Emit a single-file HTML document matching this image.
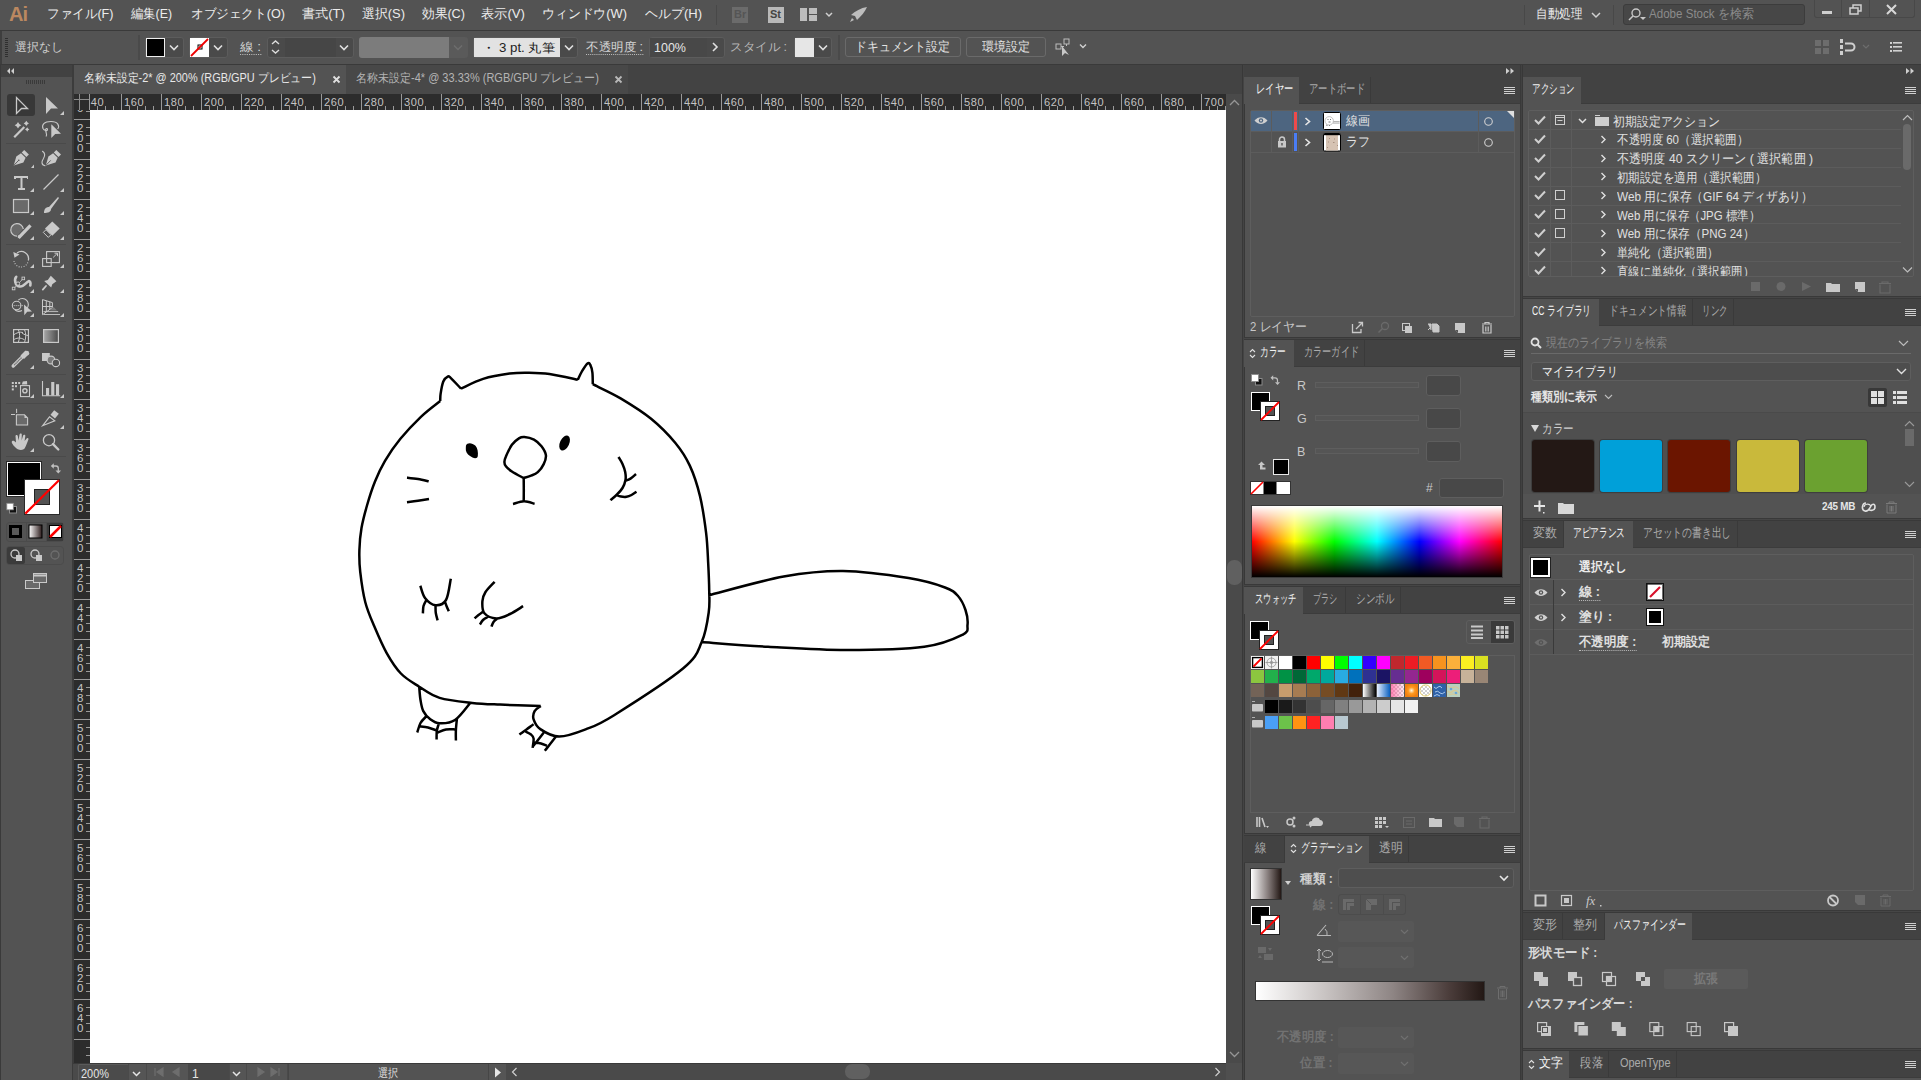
<!DOCTYPE html>
<html><head><meta charset="utf-8">
<style>
*{margin:0;padding:0;box-sizing:border-box}
html,body{width:1921px;height:1080px;overflow:hidden;background:#535353;font-family:"Liberation Sans",sans-serif;color:#d8d8d8;font-size:12px}
.a{position:absolute}
.t{position:absolute;white-space:nowrap;line-height:1}
.rn{top:97px;font-size:11px;color:#c4c4c4;letter-spacing:0.6px}
.rnv{left:77px;font-size:11.5px;color:#c4c4c4;line-height:9px}
.mn{top:7px;font-size:13px;color:#ececec}
#menubar{left:0;top:0;width:1921px;height:30px;background:#535353}
#menuline{left:0;top:30px;width:1921px;height:1px;background:#3a3a3a}
#ctrl{left:0;top:31px;width:1921px;height:33px;background:#535353}
#ctrlline{left:0;top:64px;width:1921px;height:1px;background:#3a3a3a}
#hdrrow{left:0;top:65px;width:1921px;height:12px;background:#424242}
#tools{left:1px;top:77px;width:70px;height:1003px;background:#535353}
#canvasbg{left:72px;top:65px;width:1170px;height:1015px;background:#3c3c3c}
#tabbar{left:74px;top:65px;width:1168px;height:29px;background:#434343}
#tab1{left:74px;top:65px;width:272px;height:29px;background:#535353}
#tab2{left:346px;top:65px;width:282px;height:29px;background:#484848}
#rulerT{left:74px;top:94px;width:1152px;height:16px;background:#2c2c2c}
#rulerL{left:74px;top:94px;width:16px;height:969px;background:#2c2c2c}
#artboard{left:90px;top:110px;width:1136px;height:953px;background:#fff}
#vscroll{left:1226px;top:94px;width:16px;height:986px;background:#4a4a4a}
#status{left:74px;top:1063px;width:1152px;height:17px;background:#4a4a4a}
#col1{left:1244px;top:77px;width:277px;height:1003px;background:#535353}
#col2{left:1523px;top:77px;width:398px;height:1003px;background:#535353}
</style></head><body>
<div class="a" id="menubar"></div>
<div class="a" id="menuline"></div>
<!-- MENU BAR -->
<div class="t" style="left:9px;top:4px;font-size:20px;font-weight:bold;color:#bb8860;letter-spacing:-1px">Ai</div>
<div class="t mn" style="left:47px;transform:scaleX(0.969);transform-origin:0 0">ファイル(F)</div>
<div class="t mn" style="left:131px;transform:scaleX(0.946);transform-origin:0 0">編集(E)</div>
<div class="t mn" style="left:191px;transform:scaleX(0.971);transform-origin:0 0">オブジェクト(O)</div>
<div class="t mn" style="left:302px;transform:scaleX(1.009);transform-origin:0 0">書式(T)</div>
<div class="t mn" style="left:362px;transform:scaleX(0.992);transform-origin:0 0">選択(S)</div>
<div class="t mn" style="left:422px;transform:scaleX(0.976);transform-origin:0 0">効果(C)</div>
<div class="t mn" style="left:481px;transform:scaleX(1.015);transform-origin:0 0">表示(V)</div>
<div class="t mn" style="left:542px;transform:scaleX(0.989);transform-origin:0 0">ウィンドウ(W)</div>
<div class="t mn" style="left:645px;transform:scaleX(0.999);transform-origin:0 0">ヘルプ(H)</div>
<div class="a" style="left:716px;top:5px;width:1px;height:20px;background:#484848"></div>
<div class="a" style="left:732px;top:7px;width:16px;height:16px;background:#6b6b6b"></div>
<div class="t" style="left:734px;top:9px;font-size:11px;font-weight:bold;color:#555">Br</div>
<div class="a" style="left:768px;top:7px;width:16px;height:16px;background:#b9b9b9"></div>
<div class="t" style="left:770px;top:9px;font-size:11px;font-weight:bold;color:#444">St</div>
<svg class="a" style="left:800px;top:8px" width="40" height="14"><rect x="0" y="0" width="7" height="13" fill="#bdbdbd"/><rect x="9" y="0" width="8" height="6" fill="#bdbdbd"/><rect x="9" y="7" width="8" height="6" fill="#bdbdbd"/><path d="M26 5 L29 8 L32 5" stroke="#d0d0d0" stroke-width="1.5" fill="none"/></svg>
<svg class="a" style="left:849px;top:6px" width="20" height="18"><path d="M18 1 C12 2 6 5 2 9 L6 10 L8 14 C12 10 16 6 18 1Z M3 12 L1 16 L5 14Z" fill="#bdbdbd"/></svg>
<div class="a" style="left:1524px;top:5px;width:1px;height:20px;background:#484848"></div>
<div class="t mn" style="left:1536px;transform:scaleX(0.885);transform-origin:0 0">自動処理</div>
<svg class="a" style="left:1591px;top:12px" width="12" height="8"><path d="M1 1 L5 5 L9 1" stroke="#d0d0d0" stroke-width="1.5" fill="none"/></svg>
<div class="a" style="left:1613px;top:5px;width:1px;height:20px;background:#484848"></div>
<div class="a" style="left:1623px;top:4px;width:182px;height:21px;background:#474747;border:1px solid #3c3c3c;border-radius:3px"></div>
<svg class="a" style="left:1627px;top:7px" width="22" height="16"><circle cx="9" cy="6" r="4" stroke="#c8c8c8" stroke-width="1.4" fill="none"/><path d="M6 9 L2 13" stroke="#c8c8c8" stroke-width="1.6"/><path d="M13 10 L19 10 L16 13Z" fill="#c8c8c8"/></svg>
<div class="t" style="left:1649px;top:8px;font-size:12.5px;color:#8c8c8c;transform:scaleX(0.926);transform-origin:0 0">Adobe Stock を検索</div>
<div class="a" style="left:1814px;top:-1px;width:101px;height:19px;border:1px solid #484848;border-top:none;border-radius:0 0 3px 3px"></div>
<div class="a" style="left:1841px;top:0px;width:1px;height:18px;background:#484848"></div>
<div class="a" style="left:1869px;top:0px;width:1px;height:18px;background:#484848"></div>
<div class="a" style="left:1822px;top:11px;width:10px;height:3px;background:#cfcfcf"></div>
<svg class="a" style="left:1849px;top:4px" width="14" height="12"><rect x="4" y="1" width="8" height="6" stroke="#cfcfcf" stroke-width="1.5" fill="none"/><rect x="1" y="4" width="8" height="6" stroke="#cfcfcf" stroke-width="1.5" fill="#535353"/></svg>
<svg class="a" style="left:1886px;top:4px" width="12" height="11"><path d="M1 1 L10 10 M10 1 L1 10" stroke="#d8d8d8" stroke-width="2"/></svg>

<div class="a" id="ctrl"></div>
<div class="a" id="ctrlline"></div>
<!-- CONTROL BAR -->
<div class="a" style="left:0;top:31px;width:2px;height:33px;background:#3e3e3e"></div>
<div class="a" style="left:5px;top:38px;width:3px;height:19px;background:repeating-linear-gradient(#2f2f2f 0 1px,transparent 1px 2px)"></div>
<div class="t" style="left:15px;top:41px;font-size:12px;color:#cfcfcf;transform:scaleX(0.990);transform-origin:0 0">選択なし</div>
<div class="a" style="left:138px;top:35px;width:2px;height:25px;background:#4a4a4a"></div>
<div class="a" style="left:145px;top:37px;width:39px;height:21px;border:1px solid #5c5c5c;border-radius:3px;background:#4a4a4a"></div>
<div class="a" style="left:146px;top:38px;width:19px;height:19px;background:#000;border:1px solid #eee"></div>
<svg class="a" style="left:169px;top:44px" width="12" height="8"><path d="M1 1.5 L5 5.5 L9 1.5" stroke="#e0e0e0" stroke-width="1.6" fill="none"/></svg>
<div class="a" style="left:189px;top:37px;width:39px;height:21px;border:1px solid #5c5c5c;border-radius:3px;background:#4a4a4a"></div>
<svg class="a" style="left:190px;top:38px" width="19" height="19"><rect width="19" height="19" fill="#fff"/><rect x="8" y="7" width="4" height="4" stroke="#000" stroke-width="1" fill="none"/><path d="M1 18 L18 1" stroke="#e00" stroke-width="1.8"/></svg>
<svg class="a" style="left:213px;top:44px" width="12" height="8"><path d="M1 1.5 L5 5.5 L9 1.5" stroke="#e0e0e0" stroke-width="1.6" fill="none"/></svg>
<div class="t" style="left:240px;top:41px;font-size:12px;color:#d6d6d6;border-bottom:1px dotted #bbb;padding-bottom:1px;transform:scaleX(1.125);transform-origin:0 0">線 :</div>
<div class="a" style="left:267px;top:37px;width:87px;height:21px;border:1px solid #5c5c5c;border-radius:3px;background:#4a4a4a"></div>
<div class="a" style="left:285px;top:38px;width:51px;height:19px;background:#464646"></div>
<svg class="a" style="left:270px;top:39px" width="12" height="17"><path d="M2 5 L5.5 2 L9 5 M2 11 L5.5 14 L9 11" stroke="#dcdcdc" stroke-width="1.4" fill="none"/></svg>
<svg class="a" style="left:339px;top:44px" width="12" height="8"><path d="M1 1.5 L5 5.5 L9 1.5" stroke="#e0e0e0" stroke-width="1.6" fill="none"/></svg>
<div class="a" style="left:359px;top:37px;width:109px;height:21px;background:#5a5a5a;border-radius:3px"></div>
<div class="a" style="left:359px;top:37px;width:90px;height:21px;background:#7c7c7c;border-radius:3px 0 0 3px"></div>
<svg class="a" style="left:453px;top:44px" width="12" height="8"><path d="M1 1.5 L5 5.5 L9 1.5" stroke="#6e6e6e" stroke-width="1.4" fill="none"/></svg>
<div class="a" style="left:473px;top:37px;width:105px;height:21px;border:1px solid #5c5c5c;border-radius:3px;background:#4a4a4a"></div>
<div class="a" style="left:474px;top:38px;width:86px;height:19px;background:#e2e2e2"></div>
<div class="t" style="left:482px;top:42px;font-size:12px;color:#222;transform:scaleX(1.106);transform-origin:0 0">・ 3 pt. 丸筆</div>
<svg class="a" style="left:564px;top:44px" width="12" height="8"><path d="M1 1.5 L5 5.5 L9 1.5" stroke="#e0e0e0" stroke-width="1.6" fill="none"/></svg>
<div class="t" style="left:586px;top:41px;font-size:12px;color:#d6d6d6;border-bottom:1px dotted #bbb;padding-bottom:1px;transform:scaleX(1.043);transform-origin:0 0">不透明度 :</div>
<div class="a" style="left:649px;top:37px;width:76px;height:21px;border:1px solid #5c5c5c;border-radius:3px;background:#4a4a4a"></div>
<div class="a" style="left:650px;top:38px;width:57px;height:19px;background:#484848"></div>
<div class="t" style="left:654px;top:42px;font-size:12px;color:#e6e6e6;transform:scaleX(1.042);transform-origin:0 0">100%</div>
<svg class="a" style="left:711px;top:42px" width="8" height="12"><path d="M2 1 L6 5 L2 9" stroke="#e0e0e0" stroke-width="1.6" fill="none"/></svg>
<div class="t" style="left:730px;top:41px;font-size:12px;color:#b9b9b9;transform:scaleX(1.043);transform-origin:0 0">スタイル :</div>
<div class="a" style="left:794px;top:37px;width:38px;height:21px;border:1px solid #5c5c5c;border-radius:3px;background:#4a4a4a"></div>
<div class="a" style="left:795px;top:38px;width:19px;height:19px;background:#e6e6e6"></div>
<svg class="a" style="left:818px;top:44px" width="12" height="8"><path d="M1 1.5 L5 5.5 L9 1.5" stroke="#e0e0e0" stroke-width="1.6" fill="none"/></svg>
<div class="a" style="left:838px;top:35px;width:2px;height:25px;background:#4a4a4a"></div>
<div class="a" style="left:845px;top:37px;width:116px;height:20px;border:1px solid #6a6a6a;border-radius:3px"></div>
<div class="t" style="left:855px;top:41px;font-size:12.5px;color:#e2e2e2;transform:scaleX(0.913);transform-origin:0 0">ドキュメント設定</div>
<div class="a" style="left:966px;top:37px;width:80px;height:20px;border:1px solid #6a6a6a;border-radius:3px"></div>
<div class="t" style="left:982px;top:41px;font-size:12.5px;color:#e2e2e2;transform:scaleX(0.923);transform-origin:0 0">環境設定</div>
<svg class="a" style="left:1055px;top:38px" width="40" height="18"><rect x="1" y="6" width="5" height="5" stroke="#bdbdbd" fill="none"/><rect x="9" y="1" width="5" height="5" stroke="#bdbdbd" fill="none"/><path d="M6 8.5 L9 8.5 M11.5 6 L11.5 8" stroke="#bdbdbd"/><path d="M7 8 L7 18 L10 15 L14 17 Z" fill="#c8c8c8"/><path d="M25 6.5 L28 9.5 L31 6.5" stroke="#d0d0d0" stroke-width="1.4" fill="none"/></svg>
<svg class="a" style="left:1815px;top:40px" width="15" height="14"><rect x="0" y="0" width="6" height="6" fill="#6d6d6d"/><rect x="8" y="0" width="6" height="6" fill="#6d6d6d"/><rect x="0" y="8" width="6" height="6" fill="#6d6d6d"/><rect x="8" y="8" width="6" height="6" fill="#6d6d6d"/><path d="M7 0 V14 M0 7 H14" stroke="#535353" stroke-width="1"/></svg>
<svg class="a" style="left:1840px;top:39px" width="35" height="16"><rect x="0" y="0" width="3" height="4" fill="#cfcfcf"/><rect x="0" y="6" width="3" height="4" fill="#cfcfcf"/><rect x="0" y="12" width="3" height="4" fill="#cfcfcf"/><path d="M5 4.5 H11 A3.5 3.5 0 0 1 11 11.5 H5" stroke="#cfcfcf" stroke-width="2" fill="none"/><path d="M23 6 L26 9 L29 6" stroke="#6d6d6d" stroke-width="1.2" fill="none"/></svg>
<svg class="a" style="left:1890px;top:42px" width="12" height="10"><rect x="0" y="0" width="2" height="2" fill="#d0d0d0"/><rect x="0" y="4" width="2" height="2" fill="#d0d0d0"/><rect x="0" y="8" width="2" height="2" fill="#d0d0d0"/><rect x="3" y="0" width="9" height="1.6" fill="#d0d0d0"/><rect x="3" y="4" width="9" height="1.6" fill="#d0d0d0"/><rect x="3" y="8" width="9" height="1.6" fill="#d0d0d0"/></svg>

<div class="a" id="hdrrow"></div>
<div class="a" id="canvasbg"></div>
<div class="a" id="tools"></div><svg class="a" style="left:0;top:65px" width="72" height="1015" viewBox="0 65 72 1015">
<rect x="1" y="65" width="70" height="12" fill="#424242"/>
<path d="M10 68 L7 71 L10 74 Z M14 68 L11 71 L14 74Z" fill="#cfcfcf"/>
<rect x="0" y="65" width="1" height="1015" fill="#3a3a3a"/>
<g fill="#3a3a3a"><rect x="26" y="80" width="1" height="4"/><rect x="28" y="80" width="1" height="4"/><rect x="30" y="80" width="1" height="4"/><rect x="32" y="80" width="1" height="4"/><rect x="34" y="80" width="1" height="4"/><rect x="36" y="80" width="1" height="4"/><rect x="38" y="80" width="1" height="4"/><rect x="40" y="80" width="1" height="4"/><rect x="42" y="80" width="1" height="4"/><rect x="44" y="80" width="1" height="4"/></g>
<rect x="7" y="94" width="28" height="22" rx="3" fill="#383838"/>
<path d="M16.5 97.5 L16.5 113.5 L21.5 108.5 L27.5 108.5 Z" stroke="#c9c9c9" stroke-width="1.3" fill="none" stroke-linejoin="miter"/>
<path d="M46 97 L46 114 L51 108.5 L58 108.5 Z" fill="#c9c9c9"/><path d="M60 115 L64 115 L64 111Z" fill="#c9c9c9"/>
<!-- magic wand -->
<path d="M14.2 137.2 L24.3 127" stroke="#c9c9c9" stroke-width="2.2"/>
<path d="M18 121.9 Q18.924 124.276 21.3 125.2 Q18.924 126.12400000000001 18 128.5 Q17.076 126.12400000000001 14.7 125.2 Q17.076 124.276 18 121.9Z M26.3 120.80000000000001 Q27.028000000000002 122.67200000000001 28.900000000000002 123.4 Q27.028000000000002 124.128 26.3 126.0 Q25.572 124.128 23.7 123.4 Q25.572 122.67200000000001 26.3 120.80000000000001Z M27.2 127.3 Q27.816 128.884 29.4 129.5 Q27.816 130.116 27.2 131.7 Q26.584 130.116 25.0 129.5 Q26.584 128.884 27.2 127.3Z" fill="#c9c9c9"/>
<!-- lasso -->
<path d="M57.6 129 C60 126 58 121.5 51 121.5 C44 121.5 41.5 125 43 128.5 C44 130.5 47.5 131.5 47.5 129.5 C47.5 128 45.5 128.5 45.5 130 C45.8 132.5 47.5 134 46 136.5" stroke="#c9c9c9" stroke-width="1.1" fill="none"/>
<path d="M51.3 124.3 L51.3 138 L55.2 134 L61 133.8 Z" fill="#c9c9c9"/>
<rect x="6" y="143" width="60" height="1" fill="#4a4a4a"/>
<!-- pen -->
<path d="M13.7 165.5 L16.3 156.6 L21 153.2 L25.6 157.8 L23.4 162.4 Z" fill="#c9c9c9"/><path d="M21.7 152.4 L24.2 149.9 L28.9 154.6 L26.4 157.1 Z" fill="#c9c9c9"/><path d="M14 165.2 L18.6 160.4" stroke="#535353" stroke-width="0.9"/><circle cx="18.8" cy="160.2" r="0.8" fill="#535353"/>
<path d="M31 168 L34 164.6 L34 168Z" fill="#c9c9c9"/>
<path d="M45.8 165.5 L48.4 156.6 L53.1 153.2 L57.7 157.8 L55.5 162.4 Z" fill="#c9c9c9"/><path d="M53.8 152.4 L56.3 149.9 L61 154.6 L58.5 157.1 Z" fill="#c9c9c9"/><path d="M46.1 165.2 L50.7 160.4" stroke="#535353" stroke-width="0.9"/>
<path d="M42.5 151.3 C45 153 45 156 43.5 158.5 C41.5 161.5 41 164.8 45 165.8" stroke="#c9c9c9" stroke-width="1.1" fill="none" stroke-linecap="round"/>
<!-- type -->
<path d="M14 176 H28 V179 H27 V178 H22.5 V188 H25 V190 H18 V188 H20.5 V178 H16 V179 H14Z" fill="#c9c9c9"/><path d="M30 192 L34 192 L34 188Z" fill="#c9c9c9"/>
<path d="M43.5 189.5 L58.5 174.5" stroke="#c9c9c9" stroke-width="1.3"/><path d="M60 192 L64 192 L64 188Z" fill="#c9c9c9"/>
<!-- rect -->
<rect x="13.5" y="199.5" width="15" height="13" fill="#6a6a6a" stroke="#c9c9c9" stroke-width="1.2"/><path d="M30 215 L34 215 L34 211Z" fill="#c9c9c9"/>
<path d="M44 213 C44 209 46 207 49 207 L58 197 L59 198 L51 209 C51 212 48 213 44 213Z" fill="#c9c9c9"/><path d="M60 215 L64 215 L64 211Z" fill="#c9c9c9"/>
<!-- shaper -->
<path d="M17 236.2 A6.3 6.3 0 1 1 23.3 229" fill="#6a6a6a" stroke="#c9c9c9" stroke-width="1.2"/><path d="M18.5 237.8 L30.5 225.3" stroke="#c9c9c9" stroke-width="3.2"/><path d="M17.8 238.3 L18.3 235 L21 237.2Z" fill="#c9c9c9"/><path d="M30 240 L34 240 L34 236Z" fill="#c9c9c9"/>
<path d="M45 228.6 L52.3 221.4 L59.7 228.6 L52.3 235.8Z" fill="#c9c9c9"/><path d="M43.3 232.4 L46 229.7 L51 234.7 L48.3 237.4Z" stroke="#c9c9c9" fill="none" stroke-width="1"/><path d="M60 240 L64 240 L64 236Z" fill="#c9c9c9"/>
<rect x="6" y="244" width="60" height="1" fill="#4a4a4a"/>
<!-- rotate -->
<path d="M17 253 A7.2 7.2 0 0 1 28.3 260.5" stroke="#c9c9c9" stroke-width="1.3" fill="none"/><path d="M27.8 262.5 A7.2 7.2 0 0 1 14 261" stroke="#c9c9c9" stroke-width="1.1" fill="none" stroke-dasharray="0.9 1.6"/><path d="M13.3 252 L19.5 254.5 L14.5 257.8Z" fill="#c9c9c9"/><path d="M30 268 L34 268 L34 264Z" fill="#c9c9c9"/>
<rect x="46.6" y="251.6" width="12.8" height="11" fill="none" stroke="#c9c9c9" stroke-width="1.1"/><rect x="42.6" y="258.6" width="8.6" height="7.8" fill="none" stroke="#c9c9c9" stroke-width="1.1"/><path d="M53.2 257.4 L57.3 253.3 M54.5 253.2 H57.5 V256.2" stroke="#c9c9c9" stroke-width="1" fill="none"/><path d="M60 268 L64 268 L64 264Z" fill="#c9c9c9"/>
<!-- puppet -->
<path d="M16.2 276.8 C14.2 279 14.8 285.5 19.5 286.5 C23.5 287.3 26 282.5 28.5 281.3 C30.3 280.6 30.8 283 30.3 285.5" stroke="#c9c9c9" stroke-width="2.6" fill="none" stroke-linecap="round"/>
<path d="M14 288.4 L23.3 278.4" stroke="#c9c9c9" stroke-width="0.8"/><circle cx="18" cy="283.6" r="1.7" fill="#535353" stroke="#c9c9c9" stroke-width="1"/>
<rect x="12.3" y="287.2" width="2.6" height="2.6" fill="#535353" stroke="#c9c9c9" stroke-width="0.9"/><rect x="22" y="277.1" width="2.6" height="2.6" fill="#535353" stroke="#c9c9c9" stroke-width="0.9"/><path d="M30 293 L34 293 L34 289Z" fill="#c9c9c9"/>
<path d="M44.2 281 L47.8 280 L50.8 275.8 L56.4 281.2 L52.3 284.3 L51.2 287.6 Z" fill="#c9c9c9"/><path d="M46 286 L42.8 289.6" stroke="#c9c9c9" stroke-width="1.8" stroke-linecap="round"/><path d="M60 293 L64 293 L64 289Z" fill="#c9c9c9"/>
<!-- shape builder -->
<circle cx="16.6" cy="305.6" r="4.3" fill="none" stroke="#c9c9c9" stroke-width="1.1"/><path d="M18.3 300.2 A5.3 5.3 0 1 1 26.5 308.8" fill="none" stroke="#c9c9c9" stroke-width="1.1"/><path d="M15 310 C17 311.5 20 311.5 22 310.5" stroke="#c9c9c9" stroke-width="1.1" fill="none"/>
<g fill="#c9c9c9"><circle cx="14.2" cy="305.6" r="0.6"/><circle cx="16.2" cy="305.6" r="0.6"/><circle cx="18.2" cy="305.6" r="0.6"/><circle cx="20.2" cy="305.6" r="0.6"/><circle cx="22.2" cy="305.6" r="0.6"/></g>
<path d="M24 304.4 L24.3 315.2 L27.2 311.8 L32 311.6 Z" fill="#c9c9c9"/><path d="M30 317 L34 317 L34 313Z" fill="#c9c9c9"/>
<path d="M42.5 299.6 V314.7 L52.4 307.5 V302.6 Z M46.3 300.8 V312 M49.8 301.8 V309.7 M42.5 306.5 H52.4" stroke="#c9c9c9" stroke-width="1" fill="none"/>
<path d="M50 310.5 L53.5 307 L57 310.5Z" fill="#7a7a7a"/><path d="M43.5 311.6 H58.2 M43.5 314.5 H60" stroke="#c9c9c9" stroke-width="0.9"/><path d="M60 317 L64 317 L64 313Z" fill="#c9c9c9"/>
<rect x="6" y="321" width="60" height="1" fill="#4a4a4a"/>
<!-- mesh -->
<rect x="13.6" y="329.6" width="14.8" height="12.8" fill="#484848" stroke="#c9c9c9" stroke-width="1.2"/>
<path d="M18.4 329.8 C20 333 20 338 18.4 342 M24.5 329.6 C26.2 333 26.2 338.5 24.5 342.4 M13.8 334.8 C16 333 20 331.5 23 332.5 M22 333 C24 334.5 26.5 335.5 28.4 335.5 M13.8 339.8 C16 338 20 337 24.6 339.8" stroke="#c9c9c9" stroke-width="1" fill="none"/>
<defs><linearGradient id="tg" x1="0" x2="1"><stop offset="0" stop-color="#a8a8a8"/><stop offset="1" stop-color="#4a4a4a"/></linearGradient></defs>
<rect x="43.6" y="329.6" width="14.8" height="12.8" fill="url(#tg)" stroke="#c9c9c9" stroke-width="1.2"/>
<!-- eyedropper -->
<path d="M13.2 366 L22.5 356.7" stroke="#c9c9c9" stroke-width="3.4" stroke-linecap="round"/><path d="M14.2 365 L21.8 357.4" stroke="#535353" stroke-width="1.2" stroke-dasharray="0.7 0.5"/><path d="M20.5 355.5 L25.5 350.5 L29 354 L24 359Z" fill="#c9c9c9"/><circle cx="26.8" cy="353.2" r="2.4" fill="#c9c9c9"/><path d="M30 369 L34 369 L34 365Z" fill="#c9c9c9"/>
<rect x="42" y="353" width="7.8" height="8" fill="#c9c9c9"/><circle cx="51" cy="360" r="3.9" fill="#7a7a7a" stroke="#c9c9c9" stroke-width="1.1"/><circle cx="55.9" cy="362.9" r="3.7" fill="#535353" stroke="#c9c9c9" stroke-width="1.1"/>
<rect x="6" y="374" width="60" height="1" fill="#4a4a4a"/>
<!-- symbol sprayer -->
<g fill="#c9c9c9"><rect x="11.8" y="382" width="2" height="2"/><rect x="15" y="382" width="2" height="2"/><rect x="18.2" y="382" width="2" height="2"/><rect x="11.8" y="385.2" width="2" height="2"/><rect x="15" y="385.2" width="2" height="2"/><rect x="11.8" y="388.4" width="2" height="2"/><path d="M21.8 384.5 L22.8 381.5 L27 381 L27.2 384.5Z"/></g><rect x="20.5" y="385.6" width="9" height="11" fill="none" stroke="#c9c9c9" stroke-width="1.1"/><circle cx="24.9" cy="390.8" r="2.1" fill="none" stroke="#c9c9c9" stroke-width="1.4"/><path d="M30 398 L34 398 L34 394Z" fill="#c9c9c9"/>
<path d="M42.5 381 V395.8 H60.2" stroke="#c9c9c9" stroke-width="1.1" fill="none"/><rect x="46" y="388" width="3.1" height="7.5" fill="#c9c9c9"/><rect x="51.2" y="382" width="3.1" height="13.5" fill="#c9c9c9"/><rect x="56" y="384.2" width="3.1" height="11.3" fill="#c9c9c9"/><path d="M60 398 L64 398 L64 394Z" fill="#c9c9c9"/>
<rect x="6" y="403" width="60" height="1" fill="#4a4a4a"/>
<!-- artboard -->
<path d="M11 414.5 H15 M16.6 408.8 V413" stroke="#c9c9c9" stroke-width="1"/><path d="M16.4 414.8 H24.5 L27.6 417.9 V425 H16.4Z" fill="#6a6a6a" stroke="#c9c9c9" stroke-width="1.1"/><path d="M24.5 414.8 V417.9 H27.6Z" fill="#c9c9c9"/>
<path d="M42.5 425.8 L49.5 416.8 L54.8 420.8 Z" fill="none" stroke="#c9c9c9" stroke-width="1.1"/><path d="M50.5 414.8 L54.2 410.2 L58.8 413.8 L55 418.4Z" fill="#c9c9c9"/><path d="M60 429 L64 429 L64 425Z" fill="#c9c9c9"/>
<!-- hand -->
<path d="M15 447 C13 445 11 442.5 12 441.3 C13 440.3 14.5 441 16 442.5 L15.5 436 C15.5 434.5 17.6 434.5 17.8 436 L18.6 440.5 L19.5 434.6 C19.8 433.1 21.9 433.1 21.8 434.6 L21.6 440.5 L23.1 435.6 C23.5 434.1 25.6 434.5 25.3 436 L24.6 441 L26.6 438.6 C27.3 437.6 28.9 438.1 28.4 439.6 C27.1 443 26.1 446 24.6 448.5 C23.1 450.6 17.6 450.6 15 447Z" fill="#c9c9c9"/><path d="M30 452 L34 452 L34 448Z" fill="#c9c9c9"/>
<circle cx="49" cy="440.2" r="5.6" fill="none" stroke="#c9c9c9" stroke-width="1.3"/><path d="M53 444.2 L58.3 449.5" stroke="#c9c9c9" stroke-width="2.4" stroke-linecap="round"/>
<rect x="6" y="456" width="60" height="1" fill="#4a4a4a"/>
<!-- fill stroke -->
<rect x="6.5" y="461.5" width="35" height="35" fill="#000" stroke="#2a2a2a" stroke-width="1"/>
<rect x="7.5" y="462.5" width="33" height="33" fill="none" stroke="#fff" stroke-width="1"/>
<rect x="24.5" y="479.5" width="35" height="35" fill="#fff" stroke="#2a2a2a" stroke-width="1"/>
<rect x="34.5" y="489.5" width="15" height="15" fill="#535353" stroke="#222" stroke-width="1"/>
<path d="M25.3 513.6 L59 480.2" stroke="#f00" stroke-width="2.2"/>
<path d="M53 466 H56 Q58.3 466 58.3 468.5 V471" stroke="#c0c0c0" stroke-width="1.3" fill="none"/><path d="M50.8 466 L53.8 463.2 L53.8 468.8Z M58.3 473.6 L55.5 470.6 L61.1 470.6Z" fill="#c0c0c0"/>
<rect x="9.5" y="506.5" width="7" height="6.5" fill="#111" stroke="#8a8a8a" stroke-width="1"/><rect x="6.8" y="503.3" width="6.5" height="6.5" fill="#fff" stroke="#8a8a8a" stroke-width="0.8"/>
<rect x="6.5" y="522.5" width="57" height="19" rx="3" fill="none" stroke="#4b4b4b"/>
<rect x="46" y="523" width="17" height="18" fill="#3b3b3b"/>
<path d="M26.5 523 V541 M46.5 523 V541" stroke="#4b4b4b"/>
<rect x="9" y="525" width="13" height="13" fill="#000"/><rect x="12" y="528" width="7" height="7" fill="#5a5a5a"/>
<defs><linearGradient id="tg2" x1="0" x2="1"><stop offset="0" stop-color="#fff"/><stop offset="1" stop-color="#2a1a1a"/></linearGradient></defs>
<rect x="29" y="525" width="13" height="13" fill="url(#tg2)" stroke="#000" stroke-width="1"/>
<rect x="49.5" y="525.5" width="12" height="12" fill="#fff" stroke="#000"/><path d="M50 537 L61 526" stroke="#f00" stroke-width="2.5"/>
<rect x="6.5" y="546.5" width="57" height="18" rx="3" fill="none" stroke="#4b4b4b"/>
<rect x="7" y="547" width="18" height="17" rx="2" fill="#3b3b3b"/>
<circle cx="15" cy="554" r="4" fill="none" stroke="#c9c9c9" stroke-width="1.3"/><rect x="16" y="555" width="6" height="6" fill="#c9c9c9"/>
<circle cx="35" cy="554" r="4" fill="none" stroke="#c9c9c9" stroke-width="1.3"/><rect x="36" y="555" width="6" height="6" fill="#c9c9c9"/>
<circle cx="55" cy="555" r="4" fill="none" stroke="#6e6e6e" stroke-width="1.3"/>
<rect x="25.5" y="580.5" width="14" height="8" fill="#6a6a6a" stroke="#c9c9c9"/><rect x="33.5" y="573.5" width="13" height="9" fill="#6a6a6a" stroke="#c9c9c9"/><path d="M34 575.5 H46" stroke="#c9c9c9" stroke-width="2"/>
</svg>
<div class="a" id="tabbar"></div>
<div class="a" id="tab1"></div>
<div class="a" id="tab2"></div>
<div class="t" style="left:84px;top:72px;font-size:12px;color:#e8e8e8;transform:scaleX(0.910);transform-origin:0 0">名称未設定-2* @ 200% (RGB/GPU プレビュー)</div>
<svg class="a" style="left:332px;top:75px" width="9" height="9"><path d="M1.5 1.5 L7.5 7.5 M7.5 1.5 L1.5 7.5" stroke="#e0e0e0" stroke-width="1.8"/></svg>
<div class="t" style="left:356px;top:72px;font-size:12px;color:#b4b4b4;transform:scaleX(0.917);transform-origin:0 0">名称未設定-4* @ 33.33% (RGB/GPU プレビュー)</div>
<svg class="a" style="left:614px;top:75px" width="9" height="9"><path d="M1.5 1.5 L7.5 7.5 M7.5 1.5 L1.5 7.5" stroke="#b8b8b8" stroke-width="1.8"/></svg>

<div class="a" id="rulerT"></div>
<div class="a" id="rulerL"></div>
<svg class="a" style="left:74px;top:94px" width="1152" height="16"><g stroke="#9a9a9a" stroke-width="1"><path d="M7.5 0 V16" /><path d="M15.5 12 V16" /><path d="M23.5 12 V16" /><path d="M31.5 12 V16" /><path d="M39.5 12 V16" /><path d="M47.5 0 V16" /><path d="M55.5 12 V16" /><path d="M63.5 12 V16" /><path d="M71.5 12 V16" /><path d="M79.5 12 V16" /><path d="M87.5 0 V16" /><path d="M95.5 12 V16" /><path d="M103.5 12 V16" /><path d="M111.5 12 V16" /><path d="M119.5 12 V16" /><path d="M127.5 0 V16" /><path d="M135.5 12 V16" /><path d="M143.5 12 V16" /><path d="M151.5 12 V16" /><path d="M159.5 12 V16" /><path d="M167.5 0 V16" /><path d="M175.5 12 V16" /><path d="M183.5 12 V16" /><path d="M191.5 12 V16" /><path d="M199.5 12 V16" /><path d="M207.5 0 V16" /><path d="M215.5 12 V16" /><path d="M223.5 12 V16" /><path d="M231.5 12 V16" /><path d="M239.5 12 V16" /><path d="M247.5 0 V16" /><path d="M255.5 12 V16" /><path d="M263.5 12 V16" /><path d="M271.5 12 V16" /><path d="M279.5 12 V16" /><path d="M287.5 0 V16" /><path d="M295.5 12 V16" /><path d="M303.5 12 V16" /><path d="M311.5 12 V16" /><path d="M319.5 12 V16" /><path d="M327.5 0 V16" /><path d="M335.5 12 V16" /><path d="M343.5 12 V16" /><path d="M351.5 12 V16" /><path d="M359.5 12 V16" /><path d="M367.5 0 V16" /><path d="M375.5 12 V16" /><path d="M383.5 12 V16" /><path d="M391.5 12 V16" /><path d="M399.5 12 V16" /><path d="M407.5 0 V16" /><path d="M415.5 12 V16" /><path d="M423.5 12 V16" /><path d="M431.5 12 V16" /><path d="M439.5 12 V16" /><path d="M447.5 0 V16" /><path d="M455.5 12 V16" /><path d="M463.5 12 V16" /><path d="M471.5 12 V16" /><path d="M479.5 12 V16" /><path d="M487.5 0 V16" /><path d="M495.5 12 V16" /><path d="M503.5 12 V16" /><path d="M511.5 12 V16" /><path d="M519.5 12 V16" /><path d="M527.5 0 V16" /><path d="M535.5 12 V16" /><path d="M543.5 12 V16" /><path d="M551.5 12 V16" /><path d="M559.5 12 V16" /><path d="M567.5 0 V16" /><path d="M575.5 12 V16" /><path d="M583.5 12 V16" /><path d="M591.5 12 V16" /><path d="M599.5 12 V16" /><path d="M607.5 0 V16" /><path d="M615.5 12 V16" /><path d="M623.5 12 V16" /><path d="M631.5 12 V16" /><path d="M639.5 12 V16" /><path d="M647.5 0 V16" /><path d="M655.5 12 V16" /><path d="M663.5 12 V16" /><path d="M671.5 12 V16" /><path d="M679.5 12 V16" /><path d="M687.5 0 V16" /><path d="M695.5 12 V16" /><path d="M703.5 12 V16" /><path d="M711.5 12 V16" /><path d="M719.5 12 V16" /><path d="M727.5 0 V16" /><path d="M735.5 12 V16" /><path d="M743.5 12 V16" /><path d="M751.5 12 V16" /><path d="M759.5 12 V16" /><path d="M767.5 0 V16" /><path d="M775.5 12 V16" /><path d="M783.5 12 V16" /><path d="M791.5 12 V16" /><path d="M799.5 12 V16" /><path d="M807.5 0 V16" /><path d="M815.5 12 V16" /><path d="M823.5 12 V16" /><path d="M831.5 12 V16" /><path d="M839.5 12 V16" /><path d="M847.5 0 V16" /><path d="M855.5 12 V16" /><path d="M863.5 12 V16" /><path d="M871.5 12 V16" /><path d="M879.5 12 V16" /><path d="M887.5 0 V16" /><path d="M895.5 12 V16" /><path d="M903.5 12 V16" /><path d="M911.5 12 V16" /><path d="M919.5 12 V16" /><path d="M927.5 0 V16" /><path d="M935.5 12 V16" /><path d="M943.5 12 V16" /><path d="M951.5 12 V16" /><path d="M959.5 12 V16" /><path d="M967.5 0 V16" /><path d="M975.5 12 V16" /><path d="M983.5 12 V16" /><path d="M991.5 12 V16" /><path d="M999.5 12 V16" /><path d="M1007.5 0 V16" /><path d="M1015.5 12 V16" /><path d="M1023.5 12 V16" /><path d="M1031.5 12 V16" /><path d="M1039.5 12 V16" /><path d="M1047.5 0 V16" /><path d="M1055.5 12 V16" /><path d="M1063.5 12 V16" /><path d="M1071.5 12 V16" /><path d="M1079.5 12 V16" /><path d="M1087.5 0 V16" /><path d="M1095.5 12 V16" /><path d="M1103.5 12 V16" /><path d="M1111.5 12 V16" /><path d="M1119.5 12 V16" /><path d="M1127.5 0 V16" /><path d="M1135.5 12 V16" /><path d="M1143.5 12 V16" /><path d="M1151.5 12 V16" /></g></svg><div class="t rn" style="left:84px">140</div><div class="t rn" style="left:124px">160</div><div class="t rn" style="left:164px">180</div><div class="t rn" style="left:204px">200</div><div class="t rn" style="left:244px">220</div><div class="t rn" style="left:284px">240</div><div class="t rn" style="left:324px">260</div><div class="t rn" style="left:364px">280</div><div class="t rn" style="left:404px">300</div><div class="t rn" style="left:444px">320</div><div class="t rn" style="left:484px">340</div><div class="t rn" style="left:524px">360</div><div class="t rn" style="left:564px">380</div><div class="t rn" style="left:604px">400</div><div class="t rn" style="left:644px">420</div><div class="t rn" style="left:684px">440</div><div class="t rn" style="left:724px">460</div><div class="t rn" style="left:764px">480</div><div class="t rn" style="left:804px">500</div><div class="t rn" style="left:844px">520</div><div class="t rn" style="left:884px">540</div><div class="t rn" style="left:924px">560</div><div class="t rn" style="left:964px">580</div><div class="t rn" style="left:1004px">600</div><div class="t rn" style="left:1044px">620</div><div class="t rn" style="left:1084px">640</div><div class="t rn" style="left:1124px">660</div><div class="t rn" style="left:1164px">680</div><div class="t rn" style="left:1204px">700</div><svg class="a" style="left:74px;top:94px" width="16" height="969"><g stroke="#9a9a9a" stroke-width="1"><path d="M0 -14.5 H16" /><path d="M12 -6.5 H16" /><path d="M12 1.5 H16" /><path d="M12 9.5 H16" /><path d="M12 17.5 H16" /><path d="M0 25.5 H16" /><path d="M12 33.5 H16" /><path d="M12 41.5 H16" /><path d="M12 49.5 H16" /><path d="M12 57.5 H16" /><path d="M0 65.5 H16" /><path d="M12 73.5 H16" /><path d="M12 81.5 H16" /><path d="M12 89.5 H16" /><path d="M12 97.5 H16" /><path d="M0 105.5 H16" /><path d="M12 113.5 H16" /><path d="M12 121.5 H16" /><path d="M12 129.5 H16" /><path d="M12 137.5 H16" /><path d="M0 145.5 H16" /><path d="M12 153.5 H16" /><path d="M12 161.5 H16" /><path d="M12 169.5 H16" /><path d="M12 177.5 H16" /><path d="M0 185.5 H16" /><path d="M12 193.5 H16" /><path d="M12 201.5 H16" /><path d="M12 209.5 H16" /><path d="M12 217.5 H16" /><path d="M0 225.5 H16" /><path d="M12 233.5 H16" /><path d="M12 241.5 H16" /><path d="M12 249.5 H16" /><path d="M12 257.5 H16" /><path d="M0 265.5 H16" /><path d="M12 273.5 H16" /><path d="M12 281.5 H16" /><path d="M12 289.5 H16" /><path d="M12 297.5 H16" /><path d="M0 305.5 H16" /><path d="M12 313.5 H16" /><path d="M12 321.5 H16" /><path d="M12 329.5 H16" /><path d="M12 337.5 H16" /><path d="M0 345.5 H16" /><path d="M12 353.5 H16" /><path d="M12 361.5 H16" /><path d="M12 369.5 H16" /><path d="M12 377.5 H16" /><path d="M0 385.5 H16" /><path d="M12 393.5 H16" /><path d="M12 401.5 H16" /><path d="M12 409.5 H16" /><path d="M12 417.5 H16" /><path d="M0 425.5 H16" /><path d="M12 433.5 H16" /><path d="M12 441.5 H16" /><path d="M12 449.5 H16" /><path d="M12 457.5 H16" /><path d="M0 465.5 H16" /><path d="M12 473.5 H16" /><path d="M12 481.5 H16" /><path d="M12 489.5 H16" /><path d="M12 497.5 H16" /><path d="M0 505.5 H16" /><path d="M12 513.5 H16" /><path d="M12 521.5 H16" /><path d="M12 529.5 H16" /><path d="M12 537.5 H16" /><path d="M0 545.5 H16" /><path d="M12 553.5 H16" /><path d="M12 561.5 H16" /><path d="M12 569.5 H16" /><path d="M12 577.5 H16" /><path d="M0 585.5 H16" /><path d="M12 593.5 H16" /><path d="M12 601.5 H16" /><path d="M12 609.5 H16" /><path d="M12 617.5 H16" /><path d="M0 625.5 H16" /><path d="M12 633.5 H16" /><path d="M12 641.5 H16" /><path d="M12 649.5 H16" /><path d="M12 657.5 H16" /><path d="M0 665.5 H16" /><path d="M12 673.5 H16" /><path d="M12 681.5 H16" /><path d="M12 689.5 H16" /><path d="M12 697.5 H16" /><path d="M0 705.5 H16" /><path d="M12 713.5 H16" /><path d="M12 721.5 H16" /><path d="M12 729.5 H16" /><path d="M12 737.5 H16" /><path d="M0 745.5 H16" /><path d="M12 753.5 H16" /><path d="M12 761.5 H16" /><path d="M12 769.5 H16" /><path d="M12 777.5 H16" /><path d="M0 785.5 H16" /><path d="M12 793.5 H16" /><path d="M12 801.5 H16" /><path d="M12 809.5 H16" /><path d="M12 817.5 H16" /><path d="M0 825.5 H16" /><path d="M12 833.5 H16" /><path d="M12 841.5 H16" /><path d="M12 849.5 H16" /><path d="M12 857.5 H16" /><path d="M0 865.5 H16" /><path d="M12 873.5 H16" /><path d="M12 881.5 H16" /><path d="M12 889.5 H16" /><path d="M12 897.5 H16" /><path d="M0 905.5 H16" /><path d="M12 913.5 H16" /><path d="M12 921.5 H16" /><path d="M12 929.5 H16" /><path d="M12 937.5 H16" /><path d="M0 945.5 H16" /><path d="M12 953.5 H16" /><path d="M12 961.5 H16" /></g></svg><div class="a" style="left:0;top:110px;width:90px;height:953px;overflow:hidden"><div class="t rnv" style="top:-26px">1</div><div class="t rnv" style="top:-16px">8</div><div class="t rnv" style="top:-6px">0</div><div class="t rnv" style="top:14px">2</div><div class="t rnv" style="top:24px">0</div><div class="t rnv" style="top:34px">0</div><div class="t rnv" style="top:54px">2</div><div class="t rnv" style="top:64px">2</div><div class="t rnv" style="top:74px">0</div><div class="t rnv" style="top:94px">2</div><div class="t rnv" style="top:104px">4</div><div class="t rnv" style="top:114px">0</div><div class="t rnv" style="top:134px">2</div><div class="t rnv" style="top:144px">6</div><div class="t rnv" style="top:154px">0</div><div class="t rnv" style="top:174px">2</div><div class="t rnv" style="top:184px">8</div><div class="t rnv" style="top:194px">0</div><div class="t rnv" style="top:214px">3</div><div class="t rnv" style="top:224px">0</div><div class="t rnv" style="top:234px">0</div><div class="t rnv" style="top:254px">3</div><div class="t rnv" style="top:264px">2</div><div class="t rnv" style="top:274px">0</div><div class="t rnv" style="top:294px">3</div><div class="t rnv" style="top:304px">4</div><div class="t rnv" style="top:314px">0</div><div class="t rnv" style="top:334px">3</div><div class="t rnv" style="top:344px">6</div><div class="t rnv" style="top:354px">0</div><div class="t rnv" style="top:374px">3</div><div class="t rnv" style="top:384px">8</div><div class="t rnv" style="top:394px">0</div><div class="t rnv" style="top:414px">4</div><div class="t rnv" style="top:424px">0</div><div class="t rnv" style="top:434px">0</div><div class="t rnv" style="top:454px">4</div><div class="t rnv" style="top:464px">2</div><div class="t rnv" style="top:474px">0</div><div class="t rnv" style="top:494px">4</div><div class="t rnv" style="top:504px">4</div><div class="t rnv" style="top:514px">0</div><div class="t rnv" style="top:534px">4</div><div class="t rnv" style="top:544px">6</div><div class="t rnv" style="top:554px">0</div><div class="t rnv" style="top:574px">4</div><div class="t rnv" style="top:584px">8</div><div class="t rnv" style="top:594px">0</div><div class="t rnv" style="top:614px">5</div><div class="t rnv" style="top:624px">0</div><div class="t rnv" style="top:634px">0</div><div class="t rnv" style="top:654px">5</div><div class="t rnv" style="top:664px">2</div><div class="t rnv" style="top:674px">0</div><div class="t rnv" style="top:694px">5</div><div class="t rnv" style="top:704px">4</div><div class="t rnv" style="top:714px">0</div><div class="t rnv" style="top:734px">5</div><div class="t rnv" style="top:744px">6</div><div class="t rnv" style="top:754px">0</div><div class="t rnv" style="top:774px">5</div><div class="t rnv" style="top:784px">8</div><div class="t rnv" style="top:794px">0</div><div class="t rnv" style="top:814px">6</div><div class="t rnv" style="top:824px">0</div><div class="t rnv" style="top:834px">0</div><div class="t rnv" style="top:854px">6</div><div class="t rnv" style="top:864px">2</div><div class="t rnv" style="top:874px">0</div><div class="t rnv" style="top:894px">6</div><div class="t rnv" style="top:904px">4</div><div class="t rnv" style="top:914px">0</div></div><div class="a" style="left:74px;top:94px;width:16px;height:16px;background:#2c2c2c"></div><svg class="a" style="left:74px;top:94px" width="16" height="16"><path d="M5.5 0 V16 M0 5.5 H16" stroke="#8a8a8a" stroke-width="1"/><path d="M15.5 0 V16" stroke="#9a9a9a" stroke-width="1"/></svg><div class="a" id="artboard"></div><!--BEAVER--><svg class="a" style="left:0;top:0" width="1226" height="1063"><path d="M440.2 401.0 C440.3 399.8 440.1 397.1 440.6 393.9 C441.1 390.6 442.1 384.4 443.3 381.5 C444.5 378.6 446.5 377.3 447.7 376.7 C448.9 376.1 448.2 375.6 450.4 377.6 C452.6 379.6 459.2 386.8 461.0 388.6 M461.0 388.6 C464.7 387.0 475.0 381.4 483.1 378.9 C491.2 376.4 502.2 374.6 509.6 373.6 C517.0 372.6 520.6 372.6 527.3 372.7 C533.9 372.8 541.1 372.8 549.5 374.0 C557.9 375.2 573.1 378.8 577.8 379.8 M577.8 379.8 C578.5 378.3 580.6 373.6 582.2 370.9 C583.8 368.2 586.2 364.4 587.5 363.4 C588.8 362.4 589.4 363.1 590.2 364.7 C591.0 366.2 592.0 369.4 592.4 372.7 C592.8 375.9 592.7 382.3 592.8 384.2 M592.8 384.2 C597.4 386.6 610.9 392.6 620.6 398.3 C630.3 404.1 641.9 411.2 651.1 418.7 C660.3 426.2 669.2 435.4 675.6 443.2 C682.0 451.0 685.7 456.8 689.8 465.6 C693.9 474.4 697.3 484.9 700.0 496.1 C702.7 507.3 704.7 521.6 706.1 532.8 C707.5 544.0 707.7 553.9 708.2 563.4 C708.7 572.9 709.1 581.8 709.2 590.0 C709.3 598.2 710.0 603.8 708.7 612.5 C707.5 621.2 705.9 632.8 701.7 642.1 C697.5 651.4 697.9 656.1 683.3 668.3 C668.7 680.5 630.4 705.0 614.1 715.2 C597.8 725.4 594.8 725.8 585.6 729.4 C576.4 733.0 566.6 736.6 559.1 736.6 C551.6 736.6 545.0 732.3 540.7 729.4 C536.5 726.5 534.6 722.3 533.6 719.3 C532.6 716.2 533.4 713.3 534.6 711.1 C535.8 708.9 539.7 706.9 540.7 706.0 M540.7 706.0 C533.9 705.8 511.4 705.1 500.0 704.6 C488.6 704.1 482.3 704.0 472.2 702.9 C462.1 701.8 448.4 700.6 439.6 697.9 C430.8 695.2 425.6 690.8 419.2 686.7 C412.8 682.6 406.3 679.1 400.9 673.5 C395.5 667.9 391.1 660.9 386.7 653.1 C382.3 645.3 378.0 635.1 374.4 626.6 C370.8 618.1 367.7 611.4 365.3 602.2 C362.9 593.0 361.2 580.3 360.2 571.6 C359.2 562.9 359.2 557.3 359.4 550.0 C359.6 542.7 360.2 535.4 361.5 528.0 C362.8 520.6 364.8 513.2 367.0 505.5 C369.2 497.8 372.0 488.9 375.0 481.5 C378.0 474.1 380.8 468.0 385.0 460.9 C389.2 453.8 394.4 446.1 400.4 438.8 C406.4 431.5 414.3 423.1 420.9 416.8 C427.5 410.5 437.0 403.6 440.2 401.0 M708.7 595.3 C721.2 592.2 761.3 580.6 783.7 576.6 C806.1 572.6 822.2 570.9 843.0 571.1 C863.8 571.4 891.6 575.4 908.6 578.1 C925.6 580.8 936.8 584.5 945.0 587.5 C953.2 590.5 954.6 592.2 958.0 596.0 C961.4 599.8 963.9 605.2 965.5 610.0 C967.1 614.8 968.0 620.9 967.5 625.0 C967.0 629.1 969.7 631.2 962.5 634.8 C955.3 638.4 943.7 644.3 924.3 646.8 C904.9 649.3 872.2 650.0 846.2 650.0 C820.2 650.0 792.2 648.1 768.1 646.8 C744.0 645.5 712.8 642.9 701.7 642.1 M407.0 477.6 C408.8 477.8 414.4 478.4 418.0 479.0 C421.6 479.6 426.9 480.9 428.7 481.3 M407.0 502.2 C408.8 502.0 414.3 501.3 418.0 500.8 C421.7 500.3 427.2 499.4 429.0 499.1 M523.7 478.1 C521.7 477.0 514.9 473.5 511.9 471.5 C508.9 469.5 507.1 467.9 505.9 466.3 C504.6 464.7 504.4 463.6 504.4 462.0 C504.4 460.4 504.6 459.4 505.9 456.5 C507.1 453.6 509.7 447.9 511.9 444.8 C514.1 441.7 517.2 439.4 519.3 438.1 C521.4 436.8 521.9 436.8 524.4 437.0 C526.9 437.2 531.1 438.1 534.0 439.6 C536.9 441.2 539.5 443.7 541.5 446.3 C543.5 448.9 545.5 452.2 545.9 455.2 C546.3 458.2 545.1 461.3 543.7 464.1 C542.4 466.9 540.0 470.2 537.8 472.2 C535.6 474.2 532.8 474.9 530.4 475.9 C528.0 476.9 524.8 477.7 523.7 478.1 M523.7 478.5 C523.7 480.4 523.8 486.2 523.8 490.0 C523.8 493.8 523.7 499.4 523.7 501.3 M513.0 504.0 C514.8 503.6 520.4 501.4 524.0 501.3 C527.6 501.2 532.8 503.3 534.6 503.7 M618.5 457.0 C619.2 458.2 621.4 461.5 622.5 464.0 C623.6 466.5 624.7 469.3 625.2 472.0 C625.7 474.7 626.0 477.3 625.5 480.0 C625.0 482.7 623.9 485.6 622.5 488.0 C621.1 490.4 619.0 492.5 617.0 494.5 C615.0 496.5 611.5 499.2 610.4 500.2 M624.8 481.0 C625.8 480.6 628.6 479.8 630.5 478.6 C632.4 477.4 635.1 474.8 636.0 474.0 M616.5 495.0 C617.2 495.3 619.3 496.3 621.0 496.6 C622.7 496.9 624.8 497.1 626.5 496.8 C628.2 496.5 629.8 495.9 631.5 495.0 C633.2 494.1 635.7 492.2 636.5 491.7 M420.3 585.8 C421.1 587.8 422.5 594.8 425.0 598.0 C427.5 601.2 432.0 604.9 435.5 605.2 C439.0 605.5 443.4 604.4 446.0 600.0 C448.6 595.6 450.0 582.2 450.8 578.7 M426.4 600.1 C425.9 601.1 424.1 603.8 423.5 606.0 C422.9 608.2 423.0 612.1 422.9 613.3 M435.5 605.2 C435.6 606.5 435.4 610.5 435.8 613.0 C436.2 615.5 437.3 619.2 437.6 620.4 M444.7 601.1 C445.0 601.9 445.8 604.3 446.5 606.0 C447.2 607.7 448.4 610.4 448.8 611.3 M494.6 581.8 C493.1 583.5 487.5 588.8 485.5 592.0 C483.5 595.2 482.6 597.6 482.4 601.1 C482.2 604.6 482.0 610.4 484.4 613.3 C486.8 616.2 492.3 618.3 496.6 618.4 C500.9 618.5 505.6 616.0 510.0 614.0 C514.4 612.0 520.9 607.5 523.1 606.2 M483.4 611.3 C482.6 611.9 480.0 613.8 478.5 615.0 C477.0 616.2 475.2 617.8 474.6 618.4 M488.5 616.4 C487.6 617.0 484.4 618.6 483.0 620.0 C481.6 621.4 480.4 623.8 479.9 624.5 M497.7 618.4 C497.0 619.0 494.5 620.6 493.5 622.0 C492.5 623.4 491.8 625.8 491.5 626.6 M419.2 686.6 C419.4 688.8 419.8 695.9 420.5 700.0 C421.2 704.1 421.7 707.9 423.3 711.1 C424.9 714.3 427.3 717.0 430.0 719.0 C432.7 721.0 435.4 723.1 439.6 723.3 C443.8 723.5 449.9 723.4 455.0 720.0 C460.1 716.6 467.7 705.8 470.2 702.9 M426.4 716.2 C425.4 717.3 422.0 720.3 420.5 723.0 C419.0 725.7 417.8 730.9 417.2 732.5 M438.6 724.3 C438.3 725.4 437.1 728.5 436.8 731.0 C436.5 733.5 436.6 738.2 436.6 739.6 M456.9 719.2 C456.7 721.0 456.1 726.4 455.9 730.0 C455.7 733.6 455.9 738.8 455.9 740.6 M419.2 726.4 C420.7 726.6 425.1 726.8 428.0 727.5 C430.9 728.2 435.2 729.9 436.6 730.4 M437.6 732.5 C439.0 732.0 443.1 730.0 446.0 729.5 C448.9 729.0 453.4 729.4 454.9 729.4 M519.4 734.5 C520.6 733.6 524.1 731.1 526.5 729.4 C528.9 727.7 532.4 725.1 533.6 724.3 M525.5 731.5 C526.4 732.0 529.6 733.3 531.0 734.5 C532.4 735.7 533.3 736.4 533.6 738.6 C533.9 740.8 532.8 746.3 532.6 747.8 M543.8 732.5 C542.8 733.8 539.9 737.6 538.0 740.0 C536.1 742.4 533.5 745.7 532.6 746.8 M534.6 742.7 C535.7 742.8 539.0 743.0 541.0 743.5 C543.0 744.0 545.9 745.3 546.9 745.7 M556.0 736.6 C555.1 737.8 552.4 741.1 550.5 743.5 C548.6 745.9 545.8 749.6 544.8 750.8" fill="none" stroke="#000" stroke-width="2.5" stroke-linecap="butt" stroke-linejoin="miter"/><path d="M466 445.5 C467 442.5 472 442.3 475.5 445.8 C477.5 448 478.3 452.5 477.8 456 C477.5 458.5 475 458.8 472.5 457.5 C469 455.8 466.3 453.5 465.9 450.5 C465.8 448.5 465.8 446.5 466 445.5Z" fill="#000"/><ellipse cx="564.6" cy="443" rx="4.6" ry="8" transform="rotate(25 564.6 443)" fill="#000"/></svg><!--/BEAVER-->

<!--STATUS-->
<div class="a" style="left:73px;top:1063px;width:1153px;height:1px;background:#3a3a3a"></div>
<div class="a" style="left:73px;top:1064px;width:1153px;height:16px;background:#4a4a4a"></div>
<div class="a" style="left:78px;top:1064px;width:50px;height:16px;background:#4b4b4b;border-left:1px solid #5a5a5a;border-top:1px solid #5a5a5a;border-radius:2px 0 0 0"></div>
<div class="t" style="left:81px;top:1068px;font-size:12px;color:#e6e6e6;transform:scaleX(0.912);transform-origin:0 0">200%</div>
<div class="a" style="left:128px;top:1064px;width:18px;height:16px;background:#555;border-left:1px solid #4a4a4a"></div>
<svg class="a" style="left:132px;top:1071px" width="10" height="6"><path d="M1 1 L4.5 4.5 L8 1" stroke="#e6e6e6" stroke-width="1.5" fill="none"/></svg>
<div class="a" style="left:146px;top:1064px;width:42px;height:16px;background:#555;border-left:1px solid #4a4a4a"></div>
<svg class="a" style="left:154px;top:1067px" width="28" height="10"><path d="M1 1 V9 M9 1 L3 5 L9 9Z M25 1 L19 5 L25 9Z" fill="#6e6e6e" stroke="#6e6e6e" stroke-width="1.2"/></svg>
<div class="a" style="left:188px;top:1064px;width:41px;height:16px;background:#484848;border-radius:2px 0 0 0"></div>
<div class="t" style="left:192px;top:1068px;font-size:12px;color:#e6e6e6">1</div>
<div class="a" style="left:229px;top:1064px;width:17px;height:16px;background:#555;border-left:1px solid #4a4a4a"></div>
<svg class="a" style="left:232px;top:1071px" width="10" height="6"><path d="M1 1 L4.5 4.5 L8 1" stroke="#e6e6e6" stroke-width="1.5" fill="none"/></svg>
<div class="a" style="left:246px;top:1064px;width:41px;height:16px;background:#555;border-left:1px solid #4a4a4a"></div>
<svg class="a" style="left:257px;top:1067px" width="28" height="10"><path d="M1 1 L7 5 L1 9Z M14 1 L20 5 L14 9Z M22 1 V9" fill="#6e6e6e" stroke="#6e6e6e" stroke-width="1.2"/></svg>
<div class="a" style="left:288px;top:1064px;width:200px;height:16px;background:#535353;border-left:1px solid #464646"></div>
<div class="t" style="left:378px;top:1067px;font-size:12px;color:#dcdcdc;transform:scaleX(0.846);transform-origin:0 0">選択</div>
<div class="a" style="left:488px;top:1064px;width:18px;height:16px;background:#555;border-left:1px solid #464646"></div>
<svg class="a" style="left:494px;top:1067px" width="8" height="11"><path d="M1 0.5 L7 5.5 L1 10.5Z" fill="#e6e6e6"/></svg>
<svg class="a" style="left:511px;top:1067px" width="7" height="10"><path d="M5.5 1 L1.5 5 L5.5 9" stroke="#cfcfcf" stroke-width="1.2" fill="none"/></svg>
<div class="a" style="left:845px;top:1064px;width:25px;height:15px;background:#606060;border-radius:7px"></div>
<svg class="a" style="left:1214px;top:1067px" width="7" height="10"><path d="M1.5 1 L5.5 5 L1.5 9" stroke="#cfcfcf" stroke-width="1.2" fill="none"/></svg>
<div class="a" style="left:1226px;top:94px;width:16px;height:986px;background:#4a4a4a"></div>
<div class="a" style="left:1226px;top:1063px;width:16px;height:17px;background:#4f4f4f"></div>
<svg class="a" style="left:1229px;top:99px" width="11" height="7"><path d="M1 6 L5.5 1.5 L10 6" stroke="#969696" stroke-width="1.3" fill="none"/></svg>
<div class="a" style="left:1227px;top:560px;width:15px;height:25px;background:#606060;border-radius:7px"></div>
<svg class="a" style="left:1229px;top:1051px" width="11" height="7"><path d="M1 1 L5.5 5.5 L10 1" stroke="#969696" stroke-width="1.3" fill="none"/></svg>
<!--/STATUS-->
<div class="a" id="col1"></div>
<div class="a" id="col2"></div><!--COL1--><div class="a" style="left:1242px;top:65px;width:3px;height:1015px;background:linear-gradient(to right,#383838 0 1px,#444 1px 2px,#383838 2px 3px)"></div><div class="a" style="left:1520px;top:65px;width:3px;height:1015px;background:linear-gradient(to right,#393939 0 1px,#414141 1px 2px,#383838 2px 3px)"></div><div class="a" style="left:1244px;top:65px;width:276px;height:12px;background:#424242"></div><div class="a" style="left:1523px;top:65px;width:398px;height:12px;background:#424242"></div><svg class="a" style="left:1506px;top:68px" width="9" height="6"><path d="M0 0L3.5 3L0 6ZM4.5 0L8 3L4.5 6Z" fill="#cfcfcf"/></svg><svg class="a" style="left:1906px;top:68px" width="9" height="6"><path d="M0 0L3.5 3L0 6ZM4.5 0L8 3L4.5 6Z" fill="#cfcfcf"/></svg><div class="a" style="left:1244px;top:77px;width:276px;height:26px;background:#424242"></div><div class="a" style="left:1244px;top:103px;width:276px;height:1px;background:#3c3c3c"></div><div class="a" style="left:1244px;top:77px;width:55px;height:27px;background:#535353"></div><div class="t" style="left:1256px;top:83px;font-size:12.5px;color:#f4f4f4;transform:scaleX(0.712);transform-origin:0 0">レイヤー</div><div class="a" style="left:1370px;top:77px;width:1px;height:26px;background:#3a3a3a"></div><div class="t" style="left:1309px;top:83px;font-size:12.5px;color:#ababab;transform:scaleX(0.718);transform-origin:0 0">アートボード</div><svg class="a" style="left:1504px;top:87px" width="11" height="8"><path d="M0 0.5H11M0 2.5H11M0 4.5H11M0 6.5H11" stroke="#cfcfcf" stroke-width="1"/></svg><div class="a" style="left:1250px;top:110px;width:265px;height:207px;border:1px solid #5e5e5e;border-radius:2px"></div><div class="a" style="left:1251px;top:111px;width:263px;height:20px;background:#4d6580"></div><div class="a" style="left:1251px;top:131px;width:263px;height:1px;background:#5c5c5c"></div><div class="a" style="left:1251px;top:152px;width:263px;height:1px;background:#5c5c5c"></div><div class="a" style="left:1271px;top:111px;width:1px;height:41px;background:#5c5c5c"></div><div class="a" style="left:1292px;top:111px;width:1px;height:41px;background:#5c5c5c"></div><div class="a" style="left:1298px;top:111px;width:1px;height:41px;background:#5c5c5c"></div><div class="a" style="left:1478px;top:111px;width:1px;height:41px;background:#5c5c5c"></div><div class="a" style="left:1294px;top:112px;width:3px;height:18px;background:#f04a4a"></div><div class="a" style="left:1294px;top:133px;width:3px;height:18px;background:#4a7df5"></div><svg class="a" style="left:1254px;top:116px" width="14" height="9"><path d="M0.5 4.5 C4 0 10 0 13.5 4.5 C10 9 4 9 0.5 4.5Z" fill="#d0d0d0"/><circle cx="7" cy="4.5" r="2.2" fill="#4d6580"/><circle cx="7" cy="4.5" r="1" fill="#d0d0d0"/></svg><svg class="a" style="left:1277px;top:136px" width="10" height="12"><path d="M2.5 5 V3.5 A2.5 2.5 0 0 1 7.5 3.5 V5" stroke="#c8c8c8" stroke-width="1.5" fill="none"/><rect x="1" y="5" width="8" height="6.5" fill="#c8c8c8"/><rect x="4.3" y="7" width="1.4" height="2.5" fill="#535353"/></svg><svg class="a" style="left:1304px;top:117px" width="8" height="9"><path d="M1.5 1 L5.5 4.5 L1.5 8" stroke="#e6e6e6" stroke-width="1.6" fill="none"/></svg><svg class="a" style="left:1304px;top:138px" width="8" height="9"><path d="M1.5 1 L5.5 4.5 L1.5 8" stroke="#e6e6e6" stroke-width="1.6" fill="none"/></svg><svg class="a" style="left:1323px;top:112px" width="18" height="40"><rect x="0.5" y="0.5" width="17" height="17" rx="1" fill="#fff" stroke="#000"/><circle cx="6.2" cy="8.8" r="4.2" stroke="#9a9a9a" stroke-width="0.6" fill="none"/><path d="M4.5 7.5 h1 M7 7.5 h1 M5.5 10 h2" stroke="#555" stroke-width="0.8"/><path d="M10.5 9.6 H16.6 M10 11.1 H16.6" stroke="#8a8a8a" stroke-width="0.7"/><path d="M3 13 l1.5 0.5 M6 13.5 l1 0" stroke="#666" stroke-width="0.8"/><rect x="0.5" y="21.5" width="17" height="17.5" rx="1" fill="#fff" stroke="#000"/><rect x="3" y="22.5" width="12" height="16" fill="#d6c3b3"/><rect x="1" y="22" width="16" height="1.2" fill="#000"/><g fill="#a89080"><rect x="6" y="26" width="1" height="1"/><rect x="11" y="26.5" width="1" height="1"/><rect x="5" y="29.5" width="1" height="1"/><rect x="10" y="30" width="1.5" height="1"/><rect x="14" y="33" width="1" height="1"/><rect x="4" y="35" width="1" height="1"/></g></svg><div class="t" style="left:1346px;top:115px;font-size:12.5px;color:#e4e4e4;transform:scaleX(0.923);transform-origin:0 0">線画</div><div class="t" style="left:1346px;top:136px;font-size:12.5px;color:#e4e4e4;transform:scaleX(0.923);transform-origin:0 0">ラフ</div><svg class="a" style="left:1483px;top:116px" width="11" height="11"><circle cx="5.5" cy="5.5" r="3.8" stroke="#d0d0d0" stroke-width="1.1" fill="none"/></svg><svg class="a" style="left:1483px;top:137px" width="11" height="11"><circle cx="5.5" cy="5.5" r="3.8" stroke="#d0d0d0" stroke-width="1.1" fill="none"/></svg><svg class="a" style="left:1507px;top:111px" width="7" height="7"><path d="M0 0H7V7Z" fill="#e0e0e0"/></svg><div class="t" style="left:1250px;top:321px;font-size:12.5px;color:#c8c8c8;transform:scaleX(0.913);transform-origin:0 0">2 レイヤー</div><svg class="a" style="left:1351px;top:320px" width="145" height="14"><path d="M1.5 4 V12.5 H10 V9" stroke="#c8c8c8" stroke-width="1.3" fill="none"/><path d="M5 9 L11 3 M7.5 2.5 H11.5 V6.5" stroke="#c8c8c8" stroke-width="1.3" fill="none"/><circle cx="34" cy="6" r="3.5" stroke="#6a6a6a" stroke-width="1.3" fill="none"/><path d="M31.5 8.5 L27.5 12.5" stroke="#6a6a6a" stroke-width="1.6"/><rect x="51.5" y="3.5" width="7" height="7" stroke="#c8c8c8" fill="none"/><rect x="54.5" y="6.5" width="6" height="6" fill="#c8c8c8" stroke="#c8c8c8"/><path d="M77 4 H80 V10 M77 10 L80 7 M81 4 L86 4 L88 6 V12 H82Z" fill="#c8c8c8" stroke="#c8c8c8" stroke-width="1"/><path d="M104 3 H114 V13 H107 L104 10Z" fill="#c8c8c8"/><path d="M104 10 L107 10 V13" fill="#535353"/><path d="M131 4 H141 M134 4 V2.5 H138 V4 M132 5 V13 H140 V5" stroke="#c8c8c8" stroke-width="1.2" fill="none"/><path d="M134.5 6.5 V11.5 M136 6.5 V11.5 M137.5 6.5 V11.5" stroke="#c8c8c8" stroke-width="0.8"/></svg><div class="a" style="left:1244px;top:337px;width:276px;height:3px;background:linear-gradient(#393939 0 1px,#464646 1px 2px,#393939 2px 3px)"></div><div class="a" style="left:1244px;top:340px;width:276px;height:26px;background:#424242"></div><div class="a" style="left:1244px;top:366px;width:276px;height:1px;background:#3c3c3c"></div><div class="a" style="left:1244px;top:340px;width:50px;height:27px;background:#535353"></div><div class="t" style="left:1260px;top:346px;font-size:12.5px;color:#f4f4f4;transform:scaleX(0.667);transform-origin:0 0">カラー</div><div class="a" style="left:1364px;top:340px;width:1px;height:26px;background:#3a3a3a"></div><div class="t" style="left:1303.5px;top:346px;font-size:12.5px;color:#ababab;transform:scaleX(0.705);transform-origin:0 0">カラーガイド</div><svg class="a" style="left:1504px;top:350px" width="11" height="8"><path d="M0 0.5H11M0 2.5H11M0 4.5H11M0 6.5H11" stroke="#cfcfcf" stroke-width="1"/></svg><svg class="a" style="left:1249px;top:348px" width="7" height="11"><path d="M1 4 L3.5 1.5 L6 4 M1 7 L3.5 9.5 L6 7" stroke="#e0e0e0" stroke-width="1.1" fill="none"/></svg><svg class="a" style="left:1250px;top:373px" width="32" height="14"><rect x="5.5" y="5.5" width="6.5" height="6.5" fill="#111" stroke="#8a8a8a" stroke-width="1"/><rect x="1.5" y="1.5" width="7" height="7" fill="#fff" stroke="#8a8a8a" stroke-width="0.9"/><path d="M22.5 4.8 H25 Q27.5 4.8 27.5 7.5 V9.5" stroke="#c0c0c0" stroke-width="1.2" fill="none"/><path d="M20.5 4.8 L23.2 2.2 L23.2 7.4Z M27.5 12 L25 9.3 L30 9.3Z" fill="#c0c0c0"/></svg><svg class="a" style="left:1251px;top:392px" width="32" height="31"><rect x="0.5" y="0.5" width="18" height="18" fill="#000" stroke="#fff"/><rect x="9.5" y="9.5" width="19" height="19" fill="#fff" stroke="#222"/><rect x="14.5" y="14.5" width="9" height="9" fill="#535353" stroke="#222"/><path d="M10 28 L28 10" stroke="#f00" stroke-width="1.8"/></svg><div class="t" style="left:1297px;top:380px;font-size:12.5px;color:#c8c8c8">R</div><div class="a" style="left:1315px;top:382px;width:104px;height:6px;border:1px solid #5e5e5e;background:#555"></div><div class="a" style="left:1426px;top:375px;width:35px;height:21px;border:1px solid #5e5e5e;border-radius:3px;background:#484848"></div><div class="t" style="left:1297px;top:413px;font-size:12.5px;color:#c8c8c8">G</div><div class="a" style="left:1315px;top:415px;width:104px;height:6px;border:1px solid #5e5e5e;background:#555"></div><div class="a" style="left:1426px;top:408px;width:35px;height:21px;border:1px solid #5e5e5e;border-radius:3px;background:#484848"></div><div class="t" style="left:1297px;top:446px;font-size:12.5px;color:#c8c8c8">B</div><div class="a" style="left:1315px;top:448px;width:104px;height:6px;border:1px solid #5e5e5e;background:#555"></div><div class="a" style="left:1426px;top:441px;width:35px;height:21px;border:1px solid #5e5e5e;border-radius:3px;background:#484848"></div><svg class="a" style="left:1256px;top:459px" width="34" height="16"><path d="M5.5 2.5 L2 6 H4 V10.5 H9.5 V8.5 H6.5 V6 H9Z" fill="#c8c8c8"/><rect x="17.5" y="0.5" width="15" height="15" fill="#000" stroke="#e8e8e8"/></svg><svg class="a" style="left:1250px;top:481px" width="41" height="14"><rect x="0.5" y="0.5" width="40" height="13" fill="#fff" stroke="#333"/><rect x="13.5" y="1" width="13" height="12" fill="#000"/><path d="M1 13 L13 1" stroke="#f00" stroke-width="1.6"/></svg><div class="t" style="left:1426px;top:482px;font-size:12px;color:#c8c8c8">#</div><div class="a" style="left:1439px;top:478px;width:65px;height:20px;border:1px solid #5e5e5e;border-radius:3px;background:#484848"></div><div class="a" style="left:1251px;top:505px;width:252px;height:73px;border:1px solid #3a3a3a;background:linear-gradient(to bottom,rgba(255,255,255,1) 0%,rgba(255,255,255,0) 50%,rgba(0,0,0,0) 50%,rgba(0,0,0,1) 100%),linear-gradient(to right,#f00 0%,#ff0 17%,#0f0 33%,#0ff 50%,#00f 67%,#f0f 83%,#f00 100%)"></div><div class="a" style="left:1244px;top:584px;width:276px;height:3px;background:linear-gradient(#393939 0 1px,#464646 1px 2px,#393939 2px 3px)"></div><div class="a" style="left:1244px;top:587px;width:276px;height:26px;background:#424242"></div><div class="a" style="left:1244px;top:613px;width:276px;height:1px;background:#3c3c3c"></div><div class="a" style="left:1244px;top:587px;width:59px;height:27px;background:#535353"></div><div class="t" style="left:1255px;top:593px;font-size:12.5px;color:#f4f4f4;transform:scaleX(0.637);transform-origin:0 0">スウォッチ</div><div class="a" style="left:1345px;top:587px;width:1px;height:26px;background:#3a3a3a"></div><div class="t" style="left:1312.5px;top:593px;font-size:12.5px;color:#ababab;transform:scaleX(0.628);transform-origin:0 0">ブラシ</div><div class="a" style="left:1400px;top:587px;width:1px;height:26px;background:#3a3a3a"></div><div class="t" style="left:1355.6px;top:593px;font-size:12.5px;color:#ababab;transform:scaleX(0.731);transform-origin:0 0">シンボル</div><svg class="a" style="left:1504px;top:597px" width="11" height="8"><path d="M0 0.5H11M0 2.5H11M0 4.5H11M0 6.5H11" stroke="#cfcfcf" stroke-width="1"/></svg><svg class="a" style="left:1250px;top:621px" width="32" height="31"><rect x="0.5" y="0.5" width="18" height="18" fill="#000" stroke="#fff"/><rect x="9.5" y="9.5" width="19" height="19" fill="#fff" stroke="#222"/><rect x="14.5" y="14.5" width="9" height="9" fill="#535353" stroke="#222"/><path d="M10 28 L28 10" stroke="#f00" stroke-width="1.8"/></svg><div class="a" style="left:1466px;top:620px;width:49px;height:24px;border:1px solid #5e5e5e;border-radius:3px"></div><div class="a" style="left:1491px;top:621px;width:23px;height:22px;background:#3a3a3a;border-radius:0 2px 2px 0"></div><svg class="a" style="left:1471px;top:625px" width="40" height="14"><path d="M0 1.5H12M0 5.5H12M0 9.5H12M0 13H12" stroke="#c8c8c8" stroke-width="1.8"/><g fill="#c8c8c8"><rect x="25" y="1" width="3.5" height="3.5"/><rect x="29.5" y="1" width="3.5" height="3.5"/><rect x="34" y="1" width="3.5" height="3.5"/><rect x="25" y="5.5" width="3.5" height="3.5"/><rect x="29.5" y="5.5" width="3.5" height="3.5"/><rect x="34" y="5.5" width="3.5" height="3.5"/><rect x="25" y="10" width="3.5" height="3.5"/><rect x="29.5" y="10" width="3.5" height="3.5"/><rect x="34" y="10" width="3.5" height="3.5"/></g></svg><div class="a" style="left:1250px;top:655px;width:265px;height:158px;border:1px solid #5e5e5e"></div><svg class="a" style="left:1251px;top:656px" width="240" height="74"><defs><linearGradient id="sg1"><stop offset="0" stop-color="#fff"/><stop offset="1" stop-color="#000"/></linearGradient><linearGradient id="sg2"><stop offset="0" stop-color="#e8f0ff"/><stop offset="1" stop-color="#0a60c0"/></linearGradient><pattern id="chk" width="4" height="4" patternUnits="userSpaceOnUse"><rect width="4" height="4" fill="#fff"/><rect width="2" height="2" fill="#d0d0d0"/><rect x="2" y="2" width="2" height="2" fill="#d0d0d0"/></pattern><linearGradient id="pinkfade"><stop offset="0" stop-color="#ff5a9a" stop-opacity="0.75"/><stop offset="1" stop-color="#ff5a9a" stop-opacity="0.1"/></linearGradient><radialGradient id="sg3"><stop offset="0" stop-color="#fff8e0"/><stop offset="0.5" stop-color="#ff9a20"/><stop offset="1" stop-color="#f08010"/></radialGradient></defs><rect x="0" y="0" width="13" height="13" fill="#fff"/><rect x="1.6" y="1.6" width="9.8" height="9.8" fill="none" stroke="#000" stroke-width="1.4"/><path d="M2.5 10.5 L10.5 2.5" stroke="#f00" stroke-width="1.8"/><rect x="14" y="0" width="13" height="13" fill="#f0f0f0"/><circle cx="20.5" cy="6.5" r="4.5" stroke="#888" fill="none" stroke-width="0.7"/><circle cx="20.5" cy="6.5" r="1.3" stroke="#888" fill="none" stroke-width="0.7"/><path d="M20.5 0.5 V12.5 M14.5 6.5 H26.5" stroke="#888" stroke-width="0.7"/><rect x="28" y="0" width="13" height="13" fill="#ffffff"/><rect x="42" y="0" width="13" height="13" fill="#000000"/><rect x="56" y="0" width="13" height="13" fill="#ff0000"/><rect x="70" y="0" width="13" height="13" fill="#ffff00"/><rect x="84" y="0" width="13" height="13" fill="#00ff00"/><rect x="98" y="0" width="13" height="13" fill="#00ffff"/><rect x="112" y="0" width="13" height="13" fill="#3300ff"/><rect x="126" y="0" width="13" height="13" fill="#ff00ff"/><rect x="140" y="0" width="13" height="13" fill="#c1272d"/><rect x="154" y="0" width="13" height="13" fill="#ed1c24"/><rect x="168" y="0" width="13" height="13" fill="#f15a24"/><rect x="182" y="0" width="13" height="13" fill="#f7931e"/><rect x="196" y="0" width="13" height="13" fill="#fbb03b"/><rect x="210" y="0" width="13" height="13" fill="#fcee21"/><rect x="224" y="0" width="13" height="13" fill="#d9e021"/><rect x="0" y="14" width="13" height="13" fill="#8cc63f"/><rect x="14" y="14" width="13" height="13" fill="#22b04b"/><rect x="28" y="14" width="13" height="13" fill="#009245"/><rect x="42" y="14" width="13" height="13" fill="#006837"/><rect x="56" y="14" width="13" height="13" fill="#00a86b"/><rect x="70" y="14" width="13" height="13" fill="#00a99d"/><rect x="84" y="14" width="13" height="13" fill="#29abe2"/><rect x="98" y="14" width="13" height="13" fill="#0071bc"/><rect x="112" y="14" width="13" height="13" fill="#2e3192"/><rect x="126" y="14" width="13" height="13" fill="#1b1464"/><rect x="140" y="14" width="13" height="13" fill="#662d91"/><rect x="154" y="14" width="13" height="13" fill="#93278f"/><rect x="168" y="14" width="13" height="13" fill="#9e005d"/><rect x="182" y="14" width="13" height="13" fill="#d4145a"/><rect x="196" y="14" width="13" height="13" fill="#ed1e79"/><rect x="210" y="14" width="13" height="13" fill="#c7b299"/><rect x="224" y="14" width="13" height="13" fill="#998675"/><rect x="0" y="28" width="13" height="13" fill="#736357"/><rect x="14" y="28" width="13" height="13" fill="#534741"/><rect x="28" y="28" width="13" height="13" fill="#c69c6d"/><rect x="42" y="28" width="13" height="13" fill="#a67c52"/><rect x="56" y="28" width="13" height="13" fill="#8c6239"/><rect x="70" y="28" width="13" height="13" fill="#754c24"/><rect x="84" y="28" width="13" height="13" fill="#603813"/><rect x="98" y="28" width="13" height="13" fill="#42210b"/><rect x="112" y="28" width="13" height="13" fill="url(#sg1)"/><rect x="126" y="28" width="13" height="13" fill="url(#sg2)"/><rect x="140" y="28" width="13" height="13" fill="url(#chk)"/><rect x="140" y="28" width="13" height="13" fill="url(#pinkfade)"/><rect x="154" y="28" width="13" height="13" fill="url(#sg3)"/><rect x="168" y="28" width="13" height="13" fill="#fff"/><circle cx="174.5" cy="34.5" r="5.6" fill="url(#chk)" stroke="#e0c040" stroke-width="0.8"/><rect x="182" y="28" width="13" height="13" fill="#2f62a8"/><path d="M183 31 q2 3 4 0 q2 -2 4 1 M184 36 q3 -2 5 1 q2 2 5 -1 M183 40 q3 -3 6 0" stroke="#b8d4f0" stroke-width="0.9" fill="none"/><rect x="196" y="28" width="13" height="13" fill="#b8d0c0"/><path d="M197 30 q3 3 6 1 q3 -1 5 2 M197 35 q2 3 5 0 q3 -2 6 2 M198 39 q3 -2 8 0" stroke="#d8c890" stroke-width="1.2" fill="none"/><circle cx="200" cy="33" r="1.3" fill="#6aa8d8"/><circle cx="205" cy="37" r="1.3" fill="#6aa8d8"/><path d="M1 45.5 H4" stroke="#c8c8c8" stroke-width="0.8"/><rect x="1" y="48" width="11" height="7.5" rx="0.8" fill="#c8c8c8"/><rect x="14" y="44" width="13" height="13" fill="#000000"/><rect x="28" y="44" width="13" height="13" fill="#1a1a1a"/><rect x="42" y="44" width="13" height="13" fill="#333333"/><rect x="56" y="44" width="13" height="13" fill="#4d4d4d"/><rect x="70" y="44" width="13" height="13" fill="#666666"/><rect x="84" y="44" width="13" height="13" fill="#808080"/><rect x="98" y="44" width="13" height="13" fill="#999999"/><rect x="112" y="44" width="13" height="13" fill="#b3b3b3"/><rect x="126" y="44" width="13" height="13" fill="#cccccc"/><rect x="140" y="44" width="13" height="13" fill="#e6e6e6"/><rect x="154" y="44" width="13" height="13" fill="#f2f2f2"/><path d="M1 61.5 H4" stroke="#c8c8c8" stroke-width="0.8"/><rect x="1" y="64" width="11" height="7.5" rx="0.8" fill="#c8c8c8"/><rect x="14" y="60" width="13" height="13" fill="#4a9ff5"/><rect x="28" y="60" width="13" height="13" fill="#6cc24a"/><rect x="42" y="60" width="13" height="13" fill="#ff9312"/><rect x="56" y="60" width="13" height="13" fill="#ff2222"/><rect x="70" y="60" width="13" height="13" fill="#ff7eb0"/><rect x="84" y="60" width="13" height="13" fill="#b8c8d0"/></svg><svg class="a" style="left:1256px;top:815px" width="260" height="14"><path d="M1 2 V12 M3.5 2 V12 M6 3 L9 12" stroke="#c8c8c8" stroke-width="1.6"/><path d="M10 11 H13 L11.5 13Z" fill="#c8c8c8"/><circle cx="34" cy="7" r="3" stroke="#c8c8c8" stroke-width="1.5" fill="none"/><circle cx="38" cy="3" r="1.5" fill="#c8c8c8"/><circle cx="38" cy="11" r="1.5" fill="#c8c8c8"/><path d="M55 11 C52 11 52 6 56 6 C56 2 63 1 64 5 C68 5 68 11 64 11Z" fill="#c8c8c8"/><path d="M50 10 H56 M54 8 L56 10 L54 12" stroke="#c8c8c8" stroke-width="1.2" fill="none"/><g fill="#c8c8c8"><rect x="119" y="2" width="3" height="3"/><rect x="123" y="2" width="3" height="3"/><rect x="127" y="2" width="3" height="3"/><rect x="119" y="6" width="3" height="3"/><rect x="123" y="6" width="3" height="3"/><rect x="127" y="6" width="3" height="3"/><rect x="119" y="10" width="3" height="3"/><rect x="123" y="10" width="3" height="3"/></g><path d="M129 11 H133 L131 13Z" fill="#c8c8c8"/><rect x="147.5" y="2.5" width="11" height="10" stroke="#6a6a6a" fill="none"/><path d="M150 6H156M150 9H156" stroke="#6a6a6a"/><path d="M173 3 H178 L179 4 H186 V12 H173Z" fill="#c8c8c8"/><path d="M198 2 H208 V12 H201 L198 9Z" fill="#6a6a6a"/><path d="M223 3.5 H234 M226 3.5 V2 H231 V3.5 M224 4.5 V13 H233 V4.5" stroke="#6a6a6a" stroke-width="1.1" fill="none"/></svg><div class="a" style="left:1244px;top:833px;width:276px;height:3px;background:linear-gradient(#393939 0 1px,#464646 1px 2px,#393939 2px 3px)"></div><div class="a" style="left:1244px;top:836px;width:276px;height:26px;background:#424242"></div><div class="a" style="left:1244px;top:862px;width:276px;height:1px;background:#3c3c3c"></div><div class="a" style="left:1284px;top:836px;width:1px;height:26px;background:#3a3a3a"></div><div class="t" style="left:1254.5px;top:842px;font-size:12.5px;color:#ababab;transform:scaleX(0.885);transform-origin:0 0">線</div><div class="a" style="left:1285px;top:836px;width:84px;height:27px;background:#535353"></div><div class="t" style="left:1301px;top:842px;font-size:12.5px;color:#f4f4f4;transform:scaleX(0.675);transform-origin:0 0">グラデーション</div><div class="a" style="left:1408px;top:836px;width:1px;height:26px;background:#3a3a3a"></div><div class="t" style="left:1379px;top:842px;font-size:12.5px;color:#ababab;transform:scaleX(0.912);transform-origin:0 0">透明</div><svg class="a" style="left:1504px;top:846px" width="11" height="8"><path d="M0 0.5H11M0 2.5H11M0 4.5H11M0 6.5H11" stroke="#cfcfcf" stroke-width="1"/></svg><svg class="a" style="left:1290px;top:843px" width="7" height="11"><path d="M1 4 L3.5 1.5 L6 4 M1 7 L3.5 9.5 L6 7" stroke="#e0e0e0" stroke-width="1.1" fill="none"/></svg><div class="a" style="left:1250px;top:868px;width:32px;height:32px;border:1px solid #333;background:linear-gradient(to right,#fff,#8a8180 55%,#231815)"></div><svg class="a" style="left:1285px;top:881px" width="6" height="4"><path d="M0 0H6L3 4Z" fill="#d0d0d0"/></svg><div class="t" style="left:1300px;top:873px;font-size:12.5px;color:#d0d0d0;font-weight:bold;transform:scaleX(0.975);transform-origin:0 0">種類 :</div><div class="a" style="left:1338px;top:868px;width:176px;height:20px;border:1px solid #5e5e5e;border-radius:3px;background:#4e4e4e"></div><svg class="a" style="left:1499px;top:875px" width="10" height="7"><path d="M1 1 L5 5 L9 1" stroke="#e6e6e6" stroke-width="1.6" fill="none"/></svg><div class="t" style="left:1313px;top:899px;font-size:12.5px;color:#727272;font-weight:bold;transform:scaleX(0.988);transform-origin:0 0">線 :</div><div class="a" style="left:1338px;top:894px;width:68px;height:21px;border:1px solid #4c4c4c;border-radius:3px"></div><div class="a" style="left:1360px;top:895px;width:1px;height:19px;background:#4c4c4c"></div><div class="a" style="left:1383px;top:895px;width:1px;height:19px;background:#4c4c4c"></div><svg class="a" style="left:1342px;top:898px" width="60" height="13"><path d="M1 1H12V4H4V12H1Z M5 5H12V8H8V12H5Z" fill="#6a6a6a"/><path d="M24 1H35V7H29V12H24Z" fill="#6a6a6a"/><path d="M24 1 L29 6" stroke="#555"/><path d="M47 1H58V4H50V12H47Z M51 5H58V8H54V12H51Z" fill="#6a6a6a"/></svg><svg class="a" style="left:1251px;top:906px" width="32" height="31"><rect x="0.5" y="0.5" width="18" height="18" fill="#000" stroke="#fff"/><rect x="9.5" y="9.5" width="19" height="19" fill="#fff" stroke="#222"/><rect x="14.5" y="14.5" width="9" height="9" fill="#535353" stroke="#222"/><path d="M10 28 L28 10" stroke="#f00" stroke-width="1.8"/></svg><svg class="a" style="left:1257px;top:946px" width="18" height="15"><rect x="1" y="1" width="8" height="6" fill="#6a6a6a"/><path d="M11 2H15L13 5Z" fill="#6a6a6a"/><rect x="7" y="8" width="9" height="6" fill="#6a6a6a"/><path d="M1 12H5L3 9Z" fill="#6a6a6a"/></svg><svg class="a" style="left:1316px;top:923px" width="18" height="42"><path d="M1 12.5 H15 M1 12.5 L10 2" stroke="#b8b8b8" stroke-width="1.1" fill="none"/><path d="M9 6 A6 6 0 0 1 11 12" stroke="#b8b8b8" fill="none"/><path d="M3 26 V38 M1 28 L3 26 L5 28 M1 36 L3 38 L5 36" stroke="#b8b8b8" stroke-width="1" fill="none"/><ellipse cx="11.5" cy="31" rx="5" ry="3.5" stroke="#b8b8b8" fill="none"/><path d="M6 39 H17" stroke="#b8b8b8"/></svg><div class="a" style="left:1338px;top:921px;width:76px;height:21px;background:#575757;border-radius:2px"></div><svg class="a" style="left:1400px;top:929px" width="9" height="6"><path d="M1 1 L4.5 4.5 L8 1" stroke="#707070" stroke-width="1.2" fill="none"/></svg><div class="a" style="left:1338px;top:947px;width:76px;height:21px;background:#575757;border-radius:2px"></div><svg class="a" style="left:1400px;top:955px" width="9" height="6"><path d="M1 1 L4.5 4.5 L8 1" stroke="#707070" stroke-width="1.2" fill="none"/></svg><div class="a" style="left:1338px;top:1027px;width:76px;height:21px;background:#575757;border-radius:2px"></div><svg class="a" style="left:1400px;top:1035px" width="9" height="6"><path d="M1 1 L4.5 4.5 L8 1" stroke="#707070" stroke-width="1.2" fill="none"/></svg><div class="a" style="left:1338px;top:1053px;width:76px;height:21px;background:#575757;border-radius:2px"></div><svg class="a" style="left:1400px;top:1061px" width="9" height="6"><path d="M1 1 L4.5 4.5 L8 1" stroke="#707070" stroke-width="1.2" fill="none"/></svg><div class="a" style="left:1255px;top:981px;width:230px;height:20px;border:1px solid #333;background:linear-gradient(to right,#fff 0%,#c9c4c3 30%,#8e8584 60%,#4a3c3a 85%,#231815 100%)"></div><svg class="a" style="left:1496px;top:985px" width="13" height="15"><path d="M1 3H12M4 3V1.5H9V3M2.5 4V14H10.5V4M5 5.5V12M6.5 5.5V12M8 5.5V12" stroke="#6e6e6e" stroke-width="1" fill="none"/></svg><div class="t" style="left:1277px;top:1031px;font-size:12.5px;color:#727272;font-weight:bold;transform:scaleX(0.951);transform-origin:0 0">不透明度 :</div><div class="t" style="left:1300px;top:1057px;font-size:12.5px;color:#727272;font-weight:bold;transform:scaleX(0.963);transform-origin:0 0">位置 :</div><!--/COL1--><!--COL2--><div class="a" style="left:1523px;top:77px;width:398px;height:26px;background:#424242"></div><div class="a" style="left:1523px;top:103px;width:398px;height:1px;background:#3c3c3c"></div><div class="a" style="left:1523px;top:77px;width:58px;height:27px;background:#535353"></div><div class="t" style="left:1532px;top:83px;font-size:12.5px;color:#f4f4f4;transform:scaleX(0.655);transform-origin:0 0">アクション</div><svg class="a" style="left:1905px;top:87px" width="11" height="8"><path d="M0 0.5H11M0 2.5H11M0 4.5H11M0 6.5H11" stroke="#cfcfcf" stroke-width="1"/></svg><div class="a" style="left:1528px;top:110px;width:386px;height:167px;border:1px solid #5e5e5e;border-radius:2px;overflow:hidden"><div class="a" style="left:0;top:18.3px;width:372px;height:1px;background:#5c5c5c"></div><svg class="a" style="left:5px;top:4.0px" width="12" height="10"><path d="M1 5 L4.5 8.5 L11 1.5" stroke="#cfcfcf" stroke-width="2" fill="none"/></svg><svg class="a" style="left:26px;top:4.0px" width="10" height="10"><rect x="0.5" y="0.5" width="9" height="9" stroke="#cfcfcf" fill="none"/><path d="M0.5 2.5H9.5M2.5 5.5H7.5" stroke="#cfcfcf"/></svg><svg class="a" style="left:49px;top:7.0px" width="9" height="6"><path d="M1 1 L4.5 4.5 L8 1" stroke="#e0e0e0" stroke-width="1.5" fill="none"/></svg><svg class="a" style="left:66px;top:3.0px" width="15" height="12"><path d="M0 1 H5 V2 H0Z" fill="#cfcfcf"/><rect x="0" y="3" width="14" height="9" fill="#cfcfcf"/></svg><div class="t" style="left:84px;top:3.5px;font-size:13px;color:#e0e0e0;transform:scaleX(0.915);transform-origin:0 0">初期設定アクション</div><div class="a" style="left:0;top:37.1px;width:372px;height:1px;background:#5c5c5c"></div><svg class="a" style="left:5px;top:22.8px" width="12" height="10"><path d="M1 5 L4.5 8.5 L11 1.5" stroke="#cfcfcf" stroke-width="2" fill="none"/></svg><svg class="a" style="left:71px;top:23.8px" width="7" height="9"><path d="M1.5 1 L5 4.5 L1.5 8" stroke="#e0e0e0" stroke-width="1.4" fill="none"/></svg><div class="t" style="left:88px;top:22.3px;font-size:13px;color:#e0e0e0;transform:scaleX(0.885);transform-origin:0 0">不透明度 60（選択範囲）</div><div class="a" style="left:0;top:55.9px;width:372px;height:1px;background:#5c5c5c"></div><svg class="a" style="left:5px;top:41.6px" width="12" height="10"><path d="M1 5 L4.5 8.5 L11 1.5" stroke="#cfcfcf" stroke-width="2" fill="none"/></svg><svg class="a" style="left:71px;top:42.6px" width="7" height="9"><path d="M1.5 1 L5 4.5 L1.5 8" stroke="#e0e0e0" stroke-width="1.4" fill="none"/></svg><div class="t" style="left:88px;top:41.1px;font-size:13px;color:#e0e0e0;transform:scaleX(0.933);transform-origin:0 0">不透明度 40 スクリーン ( 選択範囲 )</div><div class="a" style="left:0;top:74.7px;width:372px;height:1px;background:#5c5c5c"></div><svg class="a" style="left:5px;top:60.4px" width="12" height="10"><path d="M1 5 L4.5 8.5 L11 1.5" stroke="#cfcfcf" stroke-width="2" fill="none"/></svg><svg class="a" style="left:71px;top:61.4px" width="7" height="9"><path d="M1.5 1 L5 4.5 L1.5 8" stroke="#e0e0e0" stroke-width="1.4" fill="none"/></svg><div class="t" style="left:88px;top:59.9px;font-size:13px;color:#e0e0e0;transform:scaleX(0.882);transform-origin:0 0">初期設定を適用（選択範囲）</div><div class="a" style="left:0;top:93.5px;width:372px;height:1px;background:#5c5c5c"></div><svg class="a" style="left:5px;top:79.2px" width="12" height="10"><path d="M1 5 L4.5 8.5 L11 1.5" stroke="#cfcfcf" stroke-width="2" fill="none"/></svg><svg class="a" style="left:26px;top:79.2px" width="10" height="10"><rect x="0.5" y="0.5" width="9" height="9" stroke="#cfcfcf" fill="none"/></svg><svg class="a" style="left:71px;top:80.2px" width="7" height="9"><path d="M1.5 1 L5 4.5 L1.5 8" stroke="#e0e0e0" stroke-width="1.4" fill="none"/></svg><div class="t" style="left:88px;top:78.7px;font-size:13px;color:#e0e0e0;transform:scaleX(0.905);transform-origin:0 0">Web 用に保存（GIF 64 ディザあり）</div><div class="a" style="left:0;top:112.3px;width:372px;height:1px;background:#5c5c5c"></div><svg class="a" style="left:5px;top:98.0px" width="12" height="10"><path d="M1 5 L4.5 8.5 L11 1.5" stroke="#cfcfcf" stroke-width="2" fill="none"/></svg><svg class="a" style="left:26px;top:98.0px" width="10" height="10"><rect x="0.5" y="0.5" width="9" height="9" stroke="#cfcfcf" fill="none"/></svg><svg class="a" style="left:71px;top:99.0px" width="7" height="9"><path d="M1.5 1 L5 4.5 L1.5 8" stroke="#e0e0e0" stroke-width="1.4" fill="none"/></svg><div class="t" style="left:88px;top:97.5px;font-size:13px;color:#e0e0e0;transform:scaleX(0.877);transform-origin:0 0">Web 用に保存（JPG 標準）</div><div class="a" style="left:0;top:131.1px;width:372px;height:1px;background:#5c5c5c"></div><svg class="a" style="left:5px;top:116.8px" width="12" height="10"><path d="M1 5 L4.5 8.5 L11 1.5" stroke="#cfcfcf" stroke-width="2" fill="none"/></svg><svg class="a" style="left:26px;top:116.8px" width="10" height="10"><rect x="0.5" y="0.5" width="9" height="9" stroke="#cfcfcf" fill="none"/></svg><svg class="a" style="left:71px;top:117.8px" width="7" height="9"><path d="M1.5 1 L5 4.5 L1.5 8" stroke="#e0e0e0" stroke-width="1.4" fill="none"/></svg><div class="t" style="left:88px;top:116.3px;font-size:13px;color:#e0e0e0;transform:scaleX(0.888);transform-origin:0 0">Web 用に保存（PNG 24）</div><div class="a" style="left:0;top:149.9px;width:372px;height:1px;background:#5c5c5c"></div><svg class="a" style="left:5px;top:135.6px" width="12" height="10"><path d="M1 5 L4.5 8.5 L11 1.5" stroke="#cfcfcf" stroke-width="2" fill="none"/></svg><svg class="a" style="left:71px;top:136.6px" width="7" height="9"><path d="M1.5 1 L5 4.5 L1.5 8" stroke="#e0e0e0" stroke-width="1.4" fill="none"/></svg><div class="t" style="left:88px;top:135.1px;font-size:13px;color:#e0e0e0;transform:scaleX(0.863);transform-origin:0 0">単純化（選択範囲）</div><div class="a" style="left:0;top:168.7px;width:372px;height:1px;background:#5c5c5c"></div><svg class="a" style="left:5px;top:154.4px" width="12" height="10"><path d="M1 5 L4.5 8.5 L11 1.5" stroke="#cfcfcf" stroke-width="2" fill="none"/></svg><svg class="a" style="left:71px;top:155.4px" width="7" height="9"><path d="M1.5 1 L5 4.5 L1.5 8" stroke="#e0e0e0" stroke-width="1.4" fill="none"/></svg><div class="t" style="left:88px;top:153.9px;font-size:13px;color:#e0e0e0;transform:scaleX(0.878);transform-origin:0 0">直線に単純化（選択範囲）</div><div class="a" style="left:20.5px;top:0;width:1px;height:170px;background:#5c5c5c"></div><div class="a" style="left:41.5px;top:0;width:1px;height:170px;background:#5c5c5c"></div><svg class="a" style="left:373px;top:3px" width="11" height="8"><path d="M1 6 L5.5 1.5 L10 6" stroke="#bdbdbd" stroke-width="1.2" fill="none"/></svg><div class="a" style="left:374px;top:13px;width:8px;height:46px;background:#6a6a6a;border-radius:4px"></div><svg class="a" style="left:373px;top:155px" width="11" height="8"><path d="M1 1.5 L5.5 6 L10 1.5" stroke="#bdbdbd" stroke-width="1.2" fill="none"/></svg></div><svg class="a" style="left:1750px;top:280px" width="145" height="14"><rect x="1" y="2" width="9" height="9" fill="#6a6a6a"/><circle cx="31" cy="6.5" r="4.5" fill="#6a6a6a"/><path d="M52 2 L61 6.5 L52 11Z" fill="#6a6a6a"/><path d="M76 3 H81 L82 4 H90 V12 H76Z" fill="#c8c8c8"/><path d="M105 2 H115 V12 H108 L105 9Z" fill="#c8c8c8"/><path d="M105 9 H108 V12" fill="#535353"/><path d="M129 3.5 H141 M132 3.5 V2 H138 V3.5 M130 4.5 V13 H140 V4.5" stroke="#6a6a6a" stroke-width="1.1" fill="none"/></svg><div class="a" style="left:1523px;top:296px;width:398px;height:3px;background:linear-gradient(#393939 0 1px,#464646 1px 2px,#393939 2px 3px)"></div><div class="a" style="left:1523px;top:299px;width:398px;height:26px;background:#424242"></div><div class="a" style="left:1523px;top:325px;width:398px;height:1px;background:#3c3c3c"></div><div class="a" style="left:1523px;top:299px;width:76px;height:27px;background:#535353"></div><div class="t" style="left:1532px;top:305px;font-size:12.5px;color:#f4f4f4;transform:scaleX(0.686);transform-origin:0 0">CC ライブラリ</div><div class="a" style="left:1692px;top:299px;width:1px;height:26px;background:#3a3a3a"></div><div class="t" style="left:1609px;top:305px;font-size:12.5px;color:#ababab;transform:scaleX(0.743);transform-origin:0 0">ドキュメント情報</div><div class="a" style="left:1733px;top:299px;width:1px;height:26px;background:#3a3a3a"></div><div class="t" style="left:1702px;top:305px;font-size:12.5px;color:#ababab;transform:scaleX(0.656);transform-origin:0 0">リンク</div><svg class="a" style="left:1905px;top:309px" width="11" height="8"><path d="M0 0.5H11M0 2.5H11M0 4.5H11M0 6.5H11" stroke="#cfcfcf" stroke-width="1"/></svg><svg class="a" style="left:1530px;top:337px" width="12" height="12"><circle cx="5" cy="5" r="3.5" stroke="#e0e0e0" stroke-width="1.8" fill="none"/><path d="M7.5 7.5 L11 11" stroke="#e0e0e0" stroke-width="2"/></svg><div class="t" style="left:1546px;top:337px;font-size:12.5px;color:#858585;transform:scaleX(0.843);transform-origin:0 0">現在のライブラリを検索</div><svg class="a" style="left:1898px;top:340px" width="11" height="7"><path d="M1 1 L5.5 5.5 L10 1" stroke="#bdbdbd" stroke-width="1.2" fill="none"/></svg><div class="a" style="left:1531px;top:353px;width:380px;height:1px;background:#6a6a6a"></div><div class="a" style="left:1531px;top:362px;width:380px;height:19px;border:1px solid #5e5e5e;border-radius:3px;background:#4d4d4d"></div><div class="t" style="left:1542px;top:366px;font-size:12.5px;color:#f0f0f0;transform:scaleX(0.831);transform-origin:0 0">マイライブラリ</div><svg class="a" style="left:1896px;top:368px" width="11" height="7"><path d="M1 1 L5.5 5.5 L10 1" stroke="#e0e0e0" stroke-width="1.4" fill="none"/></svg><div class="t" style="left:1531px;top:391px;font-size:12.5px;color:#e6e6e6;font-weight:bold;transform:scaleX(0.841);transform-origin:0 0">種類別に表示</div><svg class="a" style="left:1604px;top:394px" width="9" height="6"><path d="M1 1 L4.5 4.5 L8 1" stroke="#bdbdbd" stroke-width="1.1" fill="none"/></svg><div class="a" style="left:1868px;top:388px;width:19px;height:19px;background:#383838;border-radius:2px"></div><svg class="a" style="left:1871px;top:391px" width="40" height="14"><g fill="#e0e0e0"><rect x="0" y="0" width="6" height="6"/><rect x="7" y="0" width="6" height="6"/><rect x="0" y="7" width="6" height="6"/><rect x="7" y="7" width="6" height="6"/><rect x="22" y="0" width="3" height="3"/><rect x="26" y="0" width="10" height="3"/><rect x="22" y="5" width="3" height="3"/><rect x="26" y="5" width="10" height="3"/><rect x="22" y="10" width="3" height="3"/><rect x="26" y="10" width="10" height="3"/></g></svg><div class="a" style="left:1523px;top:412px;width:398px;height:82px;background:#4f4f4f;border-top:1px solid #4a4a4a"></div><svg class="a" style="left:1531px;top:425px" width="9" height="7"><path d="M0 0H8L4 7Z" fill="#d8d8d8"/></svg><div class="t" style="left:1542px;top:423px;font-size:12.5px;color:#d0d0d0;transform:scaleX(0.815);transform-origin:0 0">カラー</div><div class="a" style="left:1531.6px;top:440px;width:62px;height:52px;background:#231815;border-radius:3px;box-shadow:0 0 0 1px #3e3e3e"></div><div class="a" style="left:1600.0px;top:440px;width:62px;height:52px;background:#00a0d9;border-radius:3px;box-shadow:0 0 0 1px #3e3e3e"></div><div class="a" style="left:1668.4px;top:440px;width:62px;height:52px;background:#6b1500;border-radius:3px;box-shadow:0 0 0 1px #3e3e3e"></div><div class="a" style="left:1736.8px;top:440px;width:62px;height:52px;background:#c9b93b;border-radius:3px;box-shadow:0 0 0 1px #3e3e3e"></div><div class="a" style="left:1805.2px;top:440px;width:62px;height:52px;background:#6ba130;border-radius:3px;box-shadow:0 0 0 1px #3e3e3e"></div><svg class="a" style="left:1904px;top:420px" width="11" height="7"><path d="M1 6 L5.5 1.5 L10 6" stroke="#9a9a9a" stroke-width="1.1" fill="none"/></svg><div class="a" style="left:1905px;top:429px;width:9px;height:17px;background:#6a6a6a"></div><svg class="a" style="left:1904px;top:481px" width="11" height="7"><path d="M1 1 L5.5 5.5 L10 1" stroke="#9a9a9a" stroke-width="1.1" fill="none"/></svg><svg class="a" style="left:1533px;top:499px" width="45" height="16"><path d="M1 7 H12 M6.5 1.5 V12.5" stroke="#e6e6e6" stroke-width="2"/><rect x="10" y="13" width="1.5" height="1.5" fill="#e6e6e6"/><path d="M25 4 H30 L31 5 H41 V15 H25Z" fill="#d8d8d8"/></svg><div class="t" style="left:1822px;top:501px;font-size:11px;color:#e6e6e6;font-weight:bold;letter-spacing:-0.3px;transform:scaleX(0.899);transform-origin:0 0">245 MB</div><svg class="a" style="left:1860px;top:500px" width="40" height="14"><path d="M6 3 C2 3 1 10 5 11 C8 12 10 8 11 6 C12 4 15 3 15 7 C15 11 10 11 8 9" stroke="#e0e0e0" stroke-width="1.6" fill="none"/><path d="M4 7 C4 4 9 3 11 6" stroke="#e0e0e0" stroke-width="1.2" fill="none"/><path d="M26 3.5 H37 M29 3.5 V2 H34 V3.5 M27 4.5 V13 H36 V4.5 M30 6 V11.5 M31.5 6 V11.5 M33 6 V11.5" stroke="#7a7a7a" stroke-width="1" fill="none"/></svg><div class="a" style="left:1523px;top:518px;width:398px;height:3px;background:linear-gradient(#393939 0 1px,#464646 1px 2px,#393939 2px 3px)"></div><div class="a" style="left:1523px;top:521px;width:398px;height:26px;background:#424242"></div><div class="a" style="left:1523px;top:547px;width:398px;height:1px;background:#3c3c3c"></div><div class="a" style="left:1563px;top:521px;width:1px;height:26px;background:#3a3a3a"></div><div class="t" style="left:1532.5px;top:527px;font-size:12.5px;color:#ababab;transform:scaleX(0.923);transform-origin:0 0">変数</div><div class="a" style="left:1564px;top:521px;width:69px;height:27px;background:#535353"></div><div class="t" style="left:1573px;top:527px;font-size:12.5px;color:#f4f4f4;transform:scaleX(0.669);transform-origin:0 0">アピアランス</div><div class="a" style="left:1737px;top:521px;width:1px;height:26px;background:#3a3a3a"></div><div class="t" style="left:1643px;top:527px;font-size:12.5px;color:#ababab;transform:scaleX(0.753);transform-origin:0 0">アセットの書き出し</div><svg class="a" style="left:1905px;top:531px" width="11" height="8"><path d="M0 0.5H11M0 2.5H11M0 4.5H11M0 6.5H11" stroke="#cfcfcf" stroke-width="1"/></svg><div class="a" style="left:1529px;top:554px;width:385px;height:337px;border:1px solid #5e5e5e;border-radius:2px"></div><div class="a" style="left:1530px;top:579px;width:383px;height:1px;background:#5c5c5c"></div><div class="a" style="left:1530px;top:604px;width:383px;height:1px;background:#5c5c5c"></div><div class="a" style="left:1530px;top:629px;width:383px;height:1px;background:#5c5c5c"></div><div class="a" style="left:1530px;top:654px;width:383px;height:1px;background:#5c5c5c"></div><div class="a" style="left:1553px;top:580px;width:1px;height:74px;background:#3a3a3a"></div><div class="a" style="left:1531px;top:558px;width:19px;height:19px;background:#000;border:2px solid #fff;box-shadow:0 0 0 1px #222"></div><div class="t" style="left:1579px;top:561px;font-size:12.5px;color:#ececec;font-weight:bold;transform:scaleX(0.912);transform-origin:0 0">選択なし</div><svg class="a" style="left:1534px;top:588px" width="14" height="9"><path d="M0.5 4.5 C4 0 10 0 13.5 4.5 C10 9 4 9 0.5 4.5Z" fill="#d0d0d0"/><circle cx="7" cy="4.5" r="2.2" fill="#535353"/><circle cx="7" cy="4.5" r="1" fill="#d0d0d0"/></svg><svg class="a" style="left:1534px;top:613px" width="14" height="9"><path d="M0.5 4.5 C4 0 10 0 13.5 4.5 C10 9 4 9 0.5 4.5Z" fill="#d0d0d0"/><circle cx="7" cy="4.5" r="2.2" fill="#535353"/><circle cx="7" cy="4.5" r="1" fill="#d0d0d0"/></svg><svg class="a" style="left:1534px;top:638px" width="14" height="9"><path d="M0.5 4.5 C4 0 10 0 13.5 4.5 C10 9 4 9 0.5 4.5Z" fill="#6e6e6e"/><circle cx="7" cy="4.5" r="2.2" fill="#535353"/><circle cx="7" cy="4.5" r="1" fill="#6e6e6e"/></svg><svg class="a" style="left:1560px;top:588px" width="7" height="9"><path d="M1.5 1 L5 4.5 L1.5 8" stroke="#e0e0e0" stroke-width="1.4" fill="none"/></svg><svg class="a" style="left:1560px;top:613px" width="7" height="9"><path d="M1.5 1 L5 4.5 L1.5 8" stroke="#e0e0e0" stroke-width="1.4" fill="none"/></svg><div class="t" style="left:1579px;top:586px;font-size:12.5px;color:#e0e0e0;font-weight:bold;border-bottom:1px dotted #bbb;padding-bottom:1px;transform:scaleX(1.017);transform-origin:0 0">線 :</div><div class="t" style="left:1579px;top:611px;font-size:12.5px;color:#e0e0e0;font-weight:bold;transform:scaleX(0.981);transform-origin:0 0">塗り :</div><div class="t" style="left:1579px;top:636px;font-size:12.5px;color:#e0e0e0;font-weight:bold;border-bottom:1px dotted #bbb;padding-bottom:1px;transform:scaleX(0.961);transform-origin:0 0">不透明度 :</div><div class="t" style="left:1662px;top:636px;font-size:12.5px;color:#e0e0e0;font-weight:bold;transform:scaleX(0.923);transform-origin:0 0">初期設定</div><svg class="a" style="left:1646px;top:583px" width="18" height="18"><rect x="0.5" y="0.5" width="17" height="17" fill="#fff" stroke="#111"/><rect x="1.5" y="1.5" width="15" height="15" fill="none" stroke="#111" stroke-width="0.6"/><path d="M4 14 L14 4" stroke="#d8102a" stroke-width="2.2"/></svg><svg class="a" style="left:1646px;top:608px" width="18" height="18"><rect x="0.5" y="0.5" width="17" height="17" fill="#fff" stroke="#111"/><rect x="3" y="3" width="12" height="12" fill="#000"/></svg><svg class="a" style="left:1534px;top:893px" width="360" height="16"><rect x="1.5" y="2.5" width="10" height="10" stroke="#c8c8c8" stroke-width="2" fill="none"/><rect x="27.5" y="2.5" width="10" height="10" stroke="#c8c8c8" stroke-width="1.2" fill="none"/><rect x="30" y="5" width="5" height="5" fill="#c8c8c8"/><text x="52" y="12" font-family="Liberation Serif" font-style="italic" font-size="13" fill="#c8c8c8">fx</text><rect x="66" y="12" width="1.5" height="1.5" fill="#c8c8c8"/><circle cx="299" cy="7.5" r="5" stroke="#c8c8c8" stroke-width="1.8" fill="none"/><path d="M295.5 4 L302.5 11" stroke="#c8c8c8" stroke-width="1.8"/><path d="M321 2 H331 V12 H324 L321 9Z" fill="#6a6a6a"/><path d="M346 3.5 H357 M349 3.5 V2 H354 V3.5 M347 4.5 V13 H356 V4.5 M350 6 V11.5 M351.5 6 V11.5 M353 6 V11.5" stroke="#6a6a6a" stroke-width="1" fill="none"/></svg><div class="a" style="left:1523px;top:910px;width:398px;height:3px;background:linear-gradient(#393939 0 1px,#464646 1px 2px,#393939 2px 3px)"></div><div class="a" style="left:1523px;top:913px;width:398px;height:26px;background:#424242"></div><div class="a" style="left:1523px;top:939px;width:398px;height:1px;background:#3c3c3c"></div><div class="a" style="left:1562px;top:913px;width:1px;height:26px;background:#3a3a3a"></div><div class="t" style="left:1532.5px;top:919px;font-size:12.5px;color:#ababab;transform:scaleX(0.923);transform-origin:0 0">変形</div><div class="a" style="left:1604px;top:913px;width:1px;height:26px;background:#3a3a3a"></div><div class="t" style="left:1573px;top:919px;font-size:12.5px;color:#ababab;transform:scaleX(0.923);transform-origin:0 0">整列</div><div class="a" style="left:1605px;top:913px;width:87px;height:27px;background:#535353"></div><div class="t" style="left:1614.4px;top:919px;font-size:12.5px;color:#f4f4f4;transform:scaleX(0.688);transform-origin:0 0">パスファインダー</div><svg class="a" style="left:1905px;top:923px" width="11" height="8"><path d="M0 0.5H11M0 2.5H11M0 4.5H11M0 6.5H11" stroke="#cfcfcf" stroke-width="1"/></svg><div class="t" style="left:1528px;top:947px;font-size:12.5px;color:#d8d8d8;font-weight:bold;transform:scaleX(0.953);transform-origin:0 0">形状モード :</div><div class="t" style="left:1528px;top:998px;font-size:12.5px;color:#d8d8d8;font-weight:bold;transform:scaleX(0.938);transform-origin:0 0">パスファインダー :</div><svg class="a" style="left:1528px;top:969px" width="140" height="20"><path d="M6 3 H15 V8 H20 V17 H11 V12 H6Z" fill="#c8c8c8"/><rect x="40" y="3" width="9" height="9" fill="#c8c8c8"/><rect x="45.5" y="8.5" width="8" height="8" fill="#535353" stroke="#c8c8c8" stroke-width="1.3"/><rect x="74.5" y="3.5" width="9" height="9" fill="none" stroke="#c8c8c8" stroke-width="1.2"/><rect x="78.5" y="7.5" width="9" height="9" fill="none" stroke="#c8c8c8" stroke-width="1.2"/><rect x="79" y="8" width="4" height="4" fill="#c8c8c8"/><path d="M108 3 H117 V8 H122 V17 H113 V12 H108Z" fill="#c8c8c8"/><rect x="113" y="8" width="4" height="4" fill="#535353"/></svg><div class="a" style="left:1664px;top:969px;width:84px;height:20px;background:#5a5a5a;border-radius:2px"></div><div class="t" style="left:1694px;top:973px;font-size:12.5px;color:#7a7a7a;font-weight:bold;transform:scaleX(0.908);transform-origin:0 0">拡張</div><svg class="a" style="left:1528px;top:1022px" width="230" height="16"><rect x="9.6" y="0.6" width="9" height="9" fill="none" stroke="#c8c8c8" stroke-width="1.2"/><rect x="13.0" y="4" width="10" height="10" fill="#c8c8c8"/><rect x="14.5" y="5.5" width="5" height="5" fill="none" stroke="#535353"/><rect x="46.40000000000009" y="0" width="10" height="10" fill="#c8c8c8"/><rect x="49.90000000000009" y="3.5" width="10.5" height="10.5" fill="#c8c8c8" stroke="#535353" stroke-width="1"/><path d="M83.79999999999995 0 H92.79999999999995 V5 H97.79999999999995 V14 H88.79999999999995 V9 H83.79999999999995Z" fill="#c8c8c8"/><rect x="121.80000000000004" y="0.6" width="9" height="9" fill="none" stroke="#c8c8c8" stroke-width="1.1"/><rect x="125.80000000000004" y="4.6" width="9" height="9" fill="none" stroke="#c8c8c8" stroke-width="1.1"/><rect x="126.20000000000005" y="5" width="5" height="5" fill="#c8c8c8"/><rect x="159.1999999999999" y="0.6" width="9" height="9" fill="none" stroke="#c8c8c8" stroke-width="1.1"/><rect x="163.1999999999999" y="4.6" width="9" height="9" fill="none" stroke="#c8c8c8" stroke-width="1.1"/><rect x="196.6" y="0.6" width="9" height="9" fill="none" stroke="#c8c8c8" stroke-width="1.2"/><rect x="200.0" y="4" width="10" height="10" fill="#c8c8c8"/></svg><div class="a" style="left:1523px;top:1048px;width:398px;height:3px;background:linear-gradient(#393939 0 1px,#464646 1px 2px,#393939 2px 3px)"></div><div class="a" style="left:1523px;top:1051px;width:398px;height:26px;background:#424242"></div><div class="a" style="left:1523px;top:1077px;width:398px;height:1px;background:#3c3c3c"></div><div class="a" style="left:1523px;top:1051px;width:46px;height:27px;background:#535353"></div><div class="t" style="left:1539px;top:1057px;font-size:12.5px;color:#f4f4f4;transform:scaleX(0.923);transform-origin:0 0">文字</div><div class="a" style="left:1608px;top:1051px;width:1px;height:26px;background:#3a3a3a"></div><div class="t" style="left:1579.5px;top:1057px;font-size:12.5px;color:#ababab;transform:scaleX(0.885);transform-origin:0 0">段落</div><div class="a" style="left:1676px;top:1051px;width:1px;height:26px;background:#3a3a3a"></div><div class="t" style="left:1620px;top:1057px;font-size:12.5px;color:#ababab;transform:scaleX(0.875);transform-origin:0 0">OpenType</div><svg class="a" style="left:1905px;top:1061px" width="11" height="8"><path d="M0 0.5H11M0 2.5H11M0 4.5H11M0 6.5H11" stroke="#cfcfcf" stroke-width="1"/></svg><svg class="a" style="left:1528px;top:1059px" width="7" height="11"><path d="M1 4 L3.5 1.5 L6 4 M1 7 L3.5 9.5 L6 7" stroke="#e0e0e0" stroke-width="1.1" fill="none"/></svg><!--/COL2-->
</body></html>
